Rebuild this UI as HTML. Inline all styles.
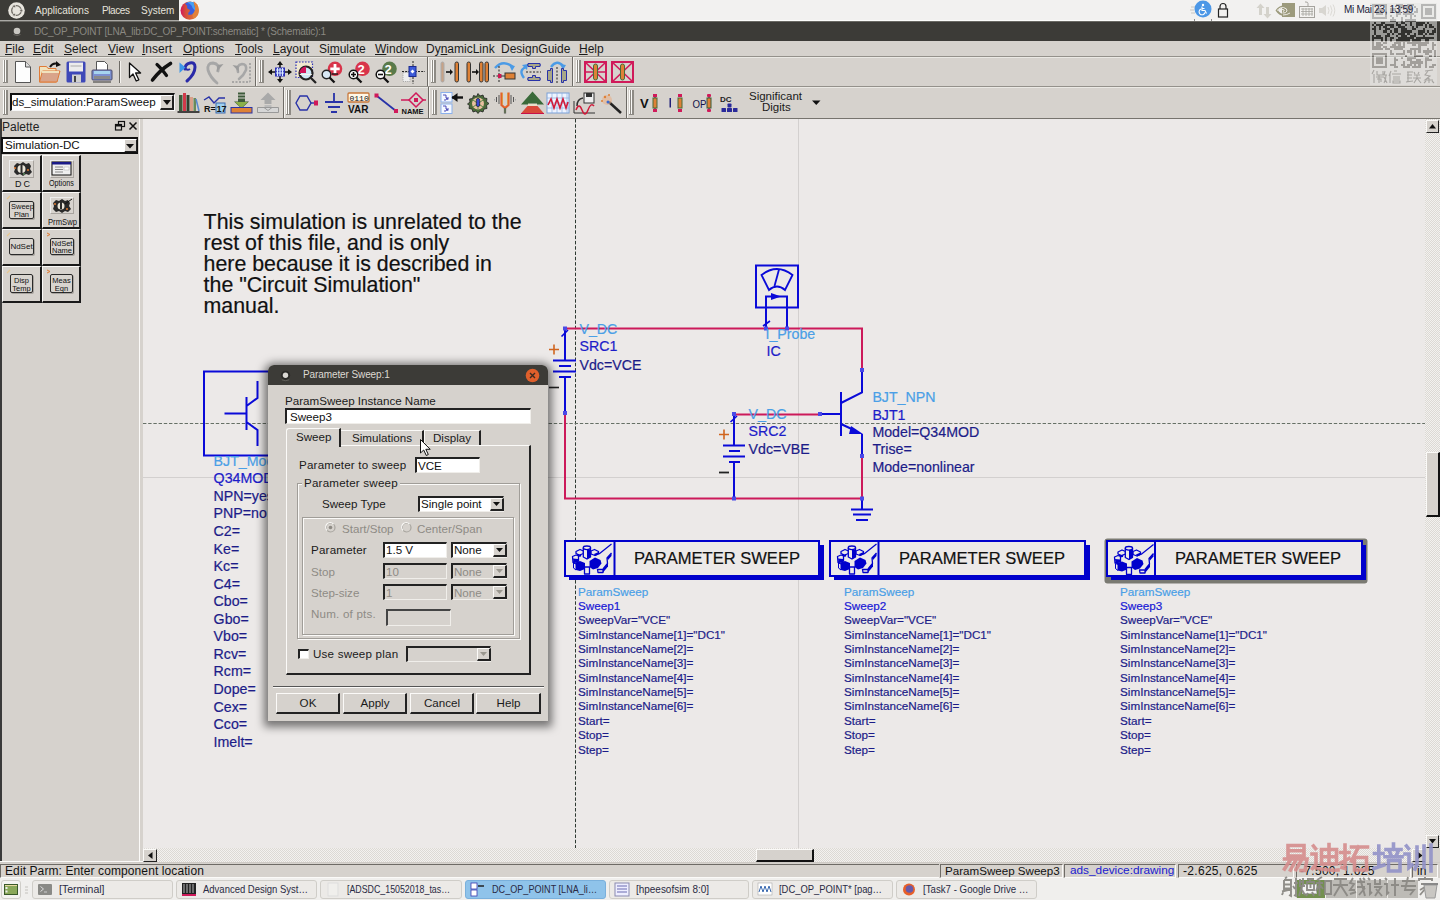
<!DOCTYPE html>
<html><head><meta charset="utf-8">
<style>
*{margin:0;padding:0;box-sizing:border-box}
html,body{width:1440px;height:900px;overflow:hidden;background:#d6d2cd;font-family:"Liberation Sans",sans-serif}
.a{position:absolute}
.t{position:absolute;white-space:nowrap;line-height:1}
svg{position:absolute;overflow:visible}
.cv text{stroke-width:0.2px}
#top{left:0;top:0;width:1440px;height:20px;background:#f2f1f0}
#topdark{left:0;top:0;width:179px;height:20px;background:#3c3b37}
#topline{left:0;top:20px;width:1440px;height:1px;background:#fcfcfb;box-shadow:0 1px 0 #6a6964}
#title{left:0;top:22px;width:1440px;height:19px;background:#3c3b37}
#menu{left:0;top:41px;width:1440px;height:15px;background:#d6d2cd}
.mi{position:absolute;top:43px;font-size:12px;color:#1a1a1a;line-height:1;white-space:nowrap}
#tb1{left:0;top:56px;width:1440px;height:31px;background:#d6d2cd;border-top:1px solid #94918b}
#tb2{left:0;top:86px;width:1440px;height:33px;background:#d6d2cd;border-top:1px solid #94918b;border-bottom:1px solid #77746e}
.hdl{position:absolute;width:5px;background:linear-gradient(90deg,#fbfaf8 0 1px,#8d8a84 1px 2px,#fbfaf8 2px 3px,#8d8a84 3px 5px);border-bottom:1px solid #8d8a84}
.gsep{position:absolute;width:2px;border-left:1px solid #6e6b66;border-right:1px solid #f4f2ee}
#canvas{left:143px;top:119px;width:1282px;height:729px;background:#ece9e8;overflow:hidden}
#pal{left:0;top:119px;width:140px;height:743px;background:#d6d2cd}
#status{left:0;top:862px;width:1440px;height:16px;background:#d6d2cd}
#task{left:0;top:878px;width:1440px;height:22px;background:#f0efed}
</style></head><body>
<!-- top panel -->
<div class="a" id="top"></div>
<div class="a" id="topdark"></div>
<svg style="left:8px;top:2px" width="17" height="17" viewBox="0 0 17 17"><circle cx="8.5" cy="8.5" r="8.3" fill="#e8e5de"/><circle cx="8.5" cy="8.5" r="4.8" fill="none" stroke="#6e6b64" stroke-width="1.3"/><circle cx="13.3" cy="8.5" r="1.5" fill="#6e6b64" stroke="#e8e5de" stroke-width="0.8"/><circle cx="6.1" cy="4.3" r="1.5" fill="#6e6b64" stroke="#e8e5de" stroke-width="0.8"/><circle cx="6.1" cy="12.7" r="1.5" fill="#6e6b64" stroke="#e8e5de" stroke-width="0.8"/></svg>
<div class="t" style="left:35px;top:6px;font-size:10px;color:#e6e3dc">Applications</div>
<div class="t" style="left:102px;top:6px;font-size:10px;color:#e6e3dc;letter-spacing:-0.4px">Places</div>
<div class="t" style="left:141px;top:6px;font-size:10px;color:#e6e3dc">System</div>
<svg style="left:180px;top:0px" width="20" height="21" viewBox="0 0 20 21"><defs><linearGradient id="ffg" x1="0" x2="1" y1="0" y2="0"><stop offset="0" stop-color="#d4145a"/><stop offset="0.3" stop-color="#d4503a"/><stop offset="1" stop-color="#e4823a"/></linearGradient></defs><circle cx="9.6" cy="10.6" r="9.1" fill="url(#ffg)"/><path d="M5 3.5Q9 1 13.5 2.2L14.5 6Q16 10 14 13.5Q11 15.5 8 14.5L8.5 12.5Q10.5 11.5 9.8 9.8Q7.5 9.2 7 7.5Q7.5 5.5 5 3.5Z" fill="#3a5ee0"/><path d="M7 2.5Q10 1.2 13.5 2.2L14.5 6Q15.5 9 15 10.5Q12 8 11.5 5.5Q10 3.5 7 2.5Z" fill="#47a0f0"/><path d="M13.5 1L17.5 4.5Q20 10 18 15Q16 18 13 19L12.5 14Q15.5 11 15 7Q14.5 4 13.5 1Z" fill="#e2823a"/><circle cx="17.5" cy="3.6" r="0.6" fill="#fff"/><circle cx="18.5" cy="5.6" r="0.6" fill="#fff"/></svg>
<div class="a" id="topline"></div><div class="a" style="left:0;top:20px;width:179px;height:1px;background:#aaa9a5"></div>
<!-- tray -->
<svg style="left:1190px;top:4px" width="8" height="12"><path d="M1 3h4M0 6h4M1 9h4" stroke="#c8c6c0" stroke-width="1"/></svg>
<svg style="left:1194px;top:0px" width="18" height="21" viewBox="0 0 18 21"><circle cx="9" cy="9" r="8.5" fill="#4c97e6"/><circle cx="9" cy="5" r="1.2" fill="#fff"/><path d="M8 6.5v4h3l1.5 3M8 8.5h2.5M7 9a3 3 0 1 0 4 3.5" stroke="#fff" stroke-width="1.1" fill="none"/><path d="M0 20h1M17 20h1" stroke="#222"/></svg>
<svg style="left:1217px;top:2px" width="12" height="16" viewBox="0 0 12 16"><path d="M3 7V4.5a3 3 0 0 1 6 0V7" stroke="#222" stroke-width="1.2" fill="none"/><rect x="1.5" y="7" width="9" height="8" fill="none" stroke="#222" stroke-width="1.2"/></svg>
<svg style="left:1256px;top:3px" width="16" height="16" viewBox="0 0 16 16"><path d="M4.5 0.5L0.5 5H3V12H6V5H8.5Z" fill="#d4d2cb"/><path d="M11.5 15.5L7.5 11H10V4H13V11H15.5Z" fill="#d4d2cb"/></svg>
<svg style="left:1274px;top:2px" width="22" height="16" viewBox="0 0 22 16"><rect x="8" y="1" width="13" height="14" fill="#9c9a7c"/><path d="M1.5 8.5Q5 3 11 3.5L11 5Q6.5 5 4 8.5Q6.5 12 11 12.5L11 14Q5 14 1.5 8.5Z" fill="#9c9a7c"/><path d="M3 8.5Q6 5 9.5 5.5Q13.5 6.5 13 9Q12 11.5 8.5 11" fill="none" stroke="#eeece6" stroke-width="1"/><path d="M6 8.5Q8 6.8 10 7.8Q11 9 9 9.5" fill="none" stroke="#eeece6" stroke-width="1"/><path d="M9 13q4 0 7-2" stroke="#eeece6" stroke-width="1" fill="none"/></svg>
<svg style="left:1298px;top:1px" width="18" height="18" viewBox="0 0 18 18"><path d="M10 5V2.5Q10 1 8 1H7" stroke="#a5a39e" fill="none"/><rect x="1.5" y="5.5" width="15" height="11" fill="#f4f3f1" stroke="#a5a39e"/><path d="M3 8h12M3 10.5h12M3 13h12M5 7v8M8 7v8M11 7v8M14 7v8" stroke="#a5a39e" stroke-width="0.8"/></svg>
<svg style="left:1318px;top:4px" width="18" height="13" viewBox="0 0 18 13"><path d="M1 4h3l4-3v11l-4-3H1z" fill="#d8d6d1"/><path d="M10 3q2 3.5 0 7M12.5 1.5q3 5 0 10M15 0.5q3.5 6 0 12" stroke="#dcdad5" fill="none"/></svg>
<!-- title -->
<div class="a" id="title"></div>
<svg style="left:11px;top:25px" width="12" height="12" viewBox="0 0 12 12"><circle cx="6" cy="6" r="3.3" fill="#c9c7c2"/><path d="M2.5 9.5q3.5 2 7 0" stroke="#6b6964" fill="none"/></svg>
<div class="t" style="left:34px;top:27px;font-size:10px;color:#8a8882;letter-spacing:-0.22px">DC_OP_POINT [LNA_lib:DC_OP_POINT:schematic] * (Schematic):1</div>
<!-- menu -->
<div class="a" id="menu"></div>
<div class="mi" style="left:5px"><u>F</u>ile</div>
<div class="mi" style="left:33px"><u>E</u>dit</div>
<div class="mi" style="left:64px"><u>S</u>elect</div>
<div class="mi" style="left:108px"><u>V</u>iew</div>
<div class="mi" style="left:142px"><u>I</u>nsert</div>
<div class="mi" style="left:183px"><u>O</u>ptions</div>
<div class="mi" style="left:235px"><u>T</u>ools</div>
<div class="mi" style="left:273px"><u>L</u>ayout</div>
<div class="mi" style="left:319px">Si<u>m</u>ulate</div>
<div class="mi" style="left:375px"><u>W</u>indow</div>
<div class="mi" style="left:426px">Dy<u>n</u>amicLink</div>
<div class="mi" style="left:501px">DesignGuide</div>
<div class="mi" style="left:579px"><u>H</u>elp</div>
<!-- toolbars -->
<div class="a" id="tb1"></div>
<div class="a" id="tb2"></div>
<div class="a" style="left:0;top:57px;width:1440px;height:1px;background:#ebe9e4"></div>
<div class="a" style="left:0;top:87px;width:1440px;height:1px;background:#ebe9e4"></div>
<!-- handles tb1 -->
<div class="hdl" style="left:3px;top:60px;height:23px"></div>
<div class="gsep" style="left:119px;top:61px;height:22px"></div>
<div class="gsep" style="left:255px;top:57px;height:29px"></div>
<div class="hdl" style="left:259px;top:60px;height:23px"></div>
<div class="gsep" style="left:427px;top:57px;height:29px"></div>
<div class="hdl" style="left:431px;top:60px;height:23px"></div>
<div class="gsep" style="left:572px;top:57px;height:29px"></div>
<div class="hdl" style="left:576px;top:60px;height:23px"></div>
<!-- tb2 -->
<div class="hdl" style="left:3px;top:90px;height:25px"></div>
<div class="gsep" style="left:283px;top:87px;height:31px"></div>
<div class="hdl" style="left:286px;top:90px;height:25px"></div>
<div class="gsep" style="left:428px;top:87px;height:31px"></div>
<div class="hdl" style="left:432px;top:90px;height:25px"></div>
<div class="gsep" style="left:626px;top:87px;height:31px"></div>
<div class="hdl" style="left:629px;top:90px;height:25px"></div>
<!-- tb1 icons -->
<svg style="left:14px;top:61px" width="18" height="22" viewBox="0 0 18 22"><path d="M1.5 0.5h10l5 5.5v15.5h-15z" fill="#fdfdfd" stroke="#555" stroke-width="1"/><path d="M11.5 0.5v5.5h5" fill="#ddd" stroke="#555"/></svg>
<svg style="left:38px;top:61px" width="24" height="22" viewBox="0 0 24 22"><path d="M12 6q3-5 8-3" stroke="#111" stroke-width="2" fill="none"/><path d="M18 0l5 4-5 2z" fill="#111"/><path d="M1.5 5.5h7l1.5 2h8v13.5h-16.5z" fill="#f1e2bd" stroke="#e07b37"/><path d="M1.5 21l3-11h17.5l-3 11z" fill="#d9a48a" stroke="#e07b37"/><path d="M4 11h17" stroke="#f1e2bd" stroke-width="2"/></svg>
<svg style="left:66px;top:61px" width="20" height="22" viewBox="0 0 20 22"><rect x="0.5" y="0.5" width="19" height="21" rx="1.5" fill="#3e48b8"/><rect x="3" y="1.5" width="14" height="9" fill="#ececec"/><path d="M4.5 5h11" stroke="#aaa"/><rect x="6" y="13.5" width="9" height="8" fill="#d0d0d0"/><rect x="8" y="15" width="2" height="6" fill="#444"/></svg>
<svg style="left:91px;top:61px" width="22" height="22" viewBox="0 0 22 22"><path d="M5.5 0.5h8l3 3v6h-11z" fill="#fff" stroke="#555"/><rect x="1" y="9" width="20" height="10" rx="1" fill="#7c8fd0" stroke="#4a4a6a"/><rect x="3" y="10" width="16" height="3" fill="#a6d4ef"/><rect x="3" y="15" width="16" height="3" fill="#8a8a8a"/><path d="M2 21h18" stroke="#333"/></svg>
<svg style="left:128px;top:62px" width="15" height="21" viewBox="0 0 15 21"><path d="M1.5 1v14.5l3.5-3.5 3.2 7 2.6-1.2-3.2-6.8h5z" fill="#fff" stroke="#111" stroke-width="1.3" stroke-linejoin="round"/></svg>
<svg style="left:150px;top:62px" width="23" height="21" viewBox="0 0 23 21"><path d="M20.5 1.5Q10 8 2.5 18" stroke="#111" stroke-width="3.6" stroke-linecap="round" fill="none"/><path d="M7 2.5Q11 6 16.5 13.5" stroke="#111" stroke-width="3.2" stroke-linecap="round" fill="none"/></svg>
<svg style="left:179px;top:61px" width="19" height="22" viewBox="0 0 19 22"><path d="M6 8q0-5 5-6 5-1 5 4 0 7-8 14" stroke="#2a2aa8" stroke-width="3" fill="none" stroke-linecap="round"/><path d="M6 7q2 3 5 1" stroke="#2a2aa8" stroke-width="2" fill="none"/><path d="M0.5 1.5L6.5 6.5L0.5 12Z" fill="#3b95e8"/></svg>
<svg style="left:205px;top:62px" width="19" height="22" viewBox="0 0 19 22"><path d="M13 9q2-7-5-8-6 0-5 7 2 7 9 13" stroke="#a7a7a7" stroke-width="2.8" fill="none" stroke-linecap="round"/><path d="M18.5 2l-6 1-1 7z" fill="#9c9c9c"/></svg>
<svg style="left:230px;top:62px" width="23" height="22" viewBox="0 0 23 22"><path d="M8 10q-2-7 4-8 5 0 4 6-2 5-7 9" stroke="#a7a7a7" stroke-width="2.6" fill="none" stroke-linecap="round"/><path d="M2.5 3l6 1 0.5 6z" fill="#9c9c9c"/><path d="M20 1v19M2 20h18" stroke="#999" stroke-width="1.5" stroke-dasharray="2 1.5"/></svg>
<svg style="left:268px;top:61px" width="24" height="22" viewBox="0 0 24 22"><path d="M12 0l-3 4h6zM12 22l-3-4h6zM0 11l4-3v6zM24 11l-4-3v6z" fill="#111"/><path d="M12 3v16M3 11h18" stroke="#111" stroke-width="1.5"/><rect x="7" y="6.5" width="10" height="9" fill="#2c2fb8"/><path d="M8 9h8M8 12h8M9.5 7v8M12 7v8M14.5 7v8" stroke="#d9ecff" stroke-width="1.2"/></svg>
<svg style="left:295px;top:61px" width="23" height="23" viewBox="0 0 23 23"><rect x="1" y="1" width="16.5" height="15.5" fill="#efe8d0" stroke="#2b2fb5" stroke-width="1.2" stroke-dasharray="1.6 1.4"/><circle cx="11" cy="12" r="6.5" fill="#cfe6f6" stroke="#222" stroke-width="2.2"/><path d="M11 12V5.6A6.4 6.4 0 0 0 4.6 12Z" fill="#d0145a"/><path d="M4.8 13.5h12" stroke="#f4f4f4" stroke-width="1"/><path d="M16 17l5 5" stroke="#222" stroke-width="2.2"/></svg>
<svg style="left:320px;top:61px" width="24" height="23" viewBox="0 0 24 23"><circle cx="15" cy="7.8" r="7.3" fill="#d8344a"/><path d="M15 3v9.5M10.3 7.8h9.4" stroke="#fff" stroke-width="2.8"/><path d="M12 13h6" stroke="#111" stroke-width="1.3"/><circle cx="6.5" cy="13.5" r="4.3" fill="#d8e8f4" stroke="#222" stroke-width="1.4"/><path d="M9.5 16.5l5 5" stroke="#111" stroke-width="2.3"/></svg>
<svg style="left:347px;top:61px" width="24" height="23" viewBox="0 0 24 23"><circle cx="15.5" cy="7.8" r="7.3" fill="#d8344a"/><text x="10.5" y="13.2" font-size="13" font-weight="bold" fill="#fff" font-family="Liberation Sans">2</text><circle cx="6.5" cy="13.5" r="4.3" fill="#fff" stroke="#111" stroke-width="1.5"/><path d="M4 13.5h5M6.5 11v5" stroke="#111" stroke-width="1.6"/><path d="M9.5 16.5l5 5" stroke="#111" stroke-width="2.3"/></svg>
<svg style="left:374px;top:61px" width="24" height="23" viewBox="0 0 24 23"><circle cx="15.5" cy="7.8" r="7.3" fill="#5a7a4a"/><text x="10.5" y="13.2" font-size="13" font-weight="bold" fill="#fff" font-family="Liberation Sans">2</text><circle cx="6.5" cy="13.5" r="4.3" fill="#fff" stroke="#111" stroke-width="1.5"/><path d="M4 13.5h5" stroke="#111" stroke-width="1.6"/><path d="M9.5 16.5l5 5" stroke="#111" stroke-width="2.3"/></svg>
<svg style="left:401px;top:61px" width="24" height="23" viewBox="0 0 24 23"><path d="M12 0v23M1 10.5h23" stroke="#222" stroke-width="1" stroke-dasharray="2 1.2"/><rect x="2" y="11.5" width="7" height="9" fill="#eeeeee" stroke="#aaa" stroke-dasharray="1.2 1"/><rect x="8" y="5.5" width="7" height="10" fill="#3d5bd8" stroke="#1b2a90"/><path d="M9.5 10.5l2-2 2 2-2 2z" fill="#fff"/></svg>
<svg style="left:440px;top:61px" width="20" height="23" viewBox="0 0 20 23"><rect x="1" y="1" width="3" height="20" rx="1.5" fill="#c8a387" stroke="#aaa"/><path d="M6 11h5" stroke="#111" stroke-width="1.6"/><path d="M10 8l3 3-3 3z" fill="#111"/><rect x="15" y="1" width="3.5" height="20" rx="1.7" fill="#de8136" stroke="#333"/></svg>
<svg style="left:466px;top:61px" width="24" height="23" viewBox="0 0 24 23"><rect x="1" y="1" width="3.5" height="20" rx="1.7" fill="#de8136" stroke="#333"/><path d="M6 11h5" stroke="#111" stroke-width="1.6"/><path d="M10 8l3 3-3 3z" fill="#111"/><rect x="13.5" y="1" width="3.5" height="20" rx="1.7" fill="#de8136" stroke="#333"/><rect x="19" y="1" width="3.5" height="20" rx="1.7" fill="#de8136" stroke="#333"/></svg>
<svg style="left:493px;top:61px" width="23" height="23" viewBox="0 0 23 23"><path d="M2 7q8-9 18-1" stroke="#4b9be6" stroke-width="2.4" fill="none"/><path d="M16 4l6 1-3 5z" fill="#4b9be6"/><path d="M6 5v17M0 15h8" stroke="#222" stroke-dasharray="2 1.5"/><rect x="5" y="13" width="3.5" height="4" fill="#cf1752"/><rect x="12" y="12" width="10" height="6" fill="#de8136" stroke="#333"/><path d="M8 15h4" stroke="#333"/></svg>
<svg style="left:519px;top:61px" width="23" height="23" viewBox="0 0 23 23"><path d="M5 17q-6-8 2-11" stroke="#4b9be6" stroke-width="2.4" fill="none"/><path d="M3 4l6-1-1 6z" fill="#4b9be6"/><path d="M8 4h14M8 18h14" stroke="#2832a8" stroke-width="1"/><path d="M9 2.5h12v3h-4.5v2h-3v-2H9zM9 19.5h12v-3h-4.5v-2h-3v2H9z" fill="#a9a787" stroke="#2832a8"/><path d="M7 11h15" stroke="#222" stroke-dasharray="2 1.5"/></svg>
<svg style="left:545px;top:61px" width="24" height="23" viewBox="0 0 24 23"><path d="M6 6q6-8 12-1" stroke="#4b9be6" stroke-width="2.4" fill="none"/><path d="M15 3l6 1-3 5z" fill="#4b9be6"/><path d="M12 6v17" stroke="#222" stroke-dasharray="2 1.5"/><path d="M2.5 9.5h3v-2h2v14h-2v-2h-3zM21.5 9.5h-3v-2h-2v14h2v-2h3z" fill="#a9a787" stroke="#2832a8"/></svg>
<svg style="left:584px;top:61px" width="23" height="22" viewBox="0 0 23 22"><rect x="1" y="1" width="21" height="20" fill="none" stroke="#d01a5a" stroke-width="2"/><path d="M1 1l21 20M22 1l-21 20M1 11h21" stroke="#d01a5a" stroke-width="1.6"/><rect x="9.5" y="3" width="4" height="16" rx="2" fill="#de8136" stroke="#4a6a3a"/></svg>
<svg style="left:611px;top:61px" width="23" height="22" viewBox="0 0 23 22"><rect x="1" y="1" width="21" height="20" fill="none" stroke="#d01a5a" stroke-width="2"/><path d="M1 1l21 20M22 1l-21 20" stroke="#d01a5a" stroke-width="1.6"/><rect x="9.5" y="3" width="4" height="16" rx="2" fill="#de8136" stroke="#4a6a3a"/></svg>
<!-- tb2 icons -->
<div class="a" style="left:10px;top:93px;width:165px;height:18px;background:#fff;border-top:2px solid #111;border-left:2px solid #111;border-bottom:1px solid #f8f8f8;border-right:1px solid #f8f8f8"></div>
<div class="t" style="left:12px;top:96px;font-size:11.6px;color:#111">ds_simulation:ParamSweep</div>
<div class="a" style="left:160px;top:95px;width:14px;height:15px;background:#d6d2cd;border-left:1px solid #fff;border-top:1px solid #fff;border-right:2px solid #222;border-bottom:2px solid #222"></div>
<svg style="left:163px;top:100px" width="8" height="5"><path d="M0 0h8l-4 5z" fill="#111"/></svg>
<svg style="left:177px;top:92px" width="23" height="21" viewBox="0 0 23 21"><rect x="2" y="3" width="3.5" height="16" fill="#3d5a3a"/><rect x="6" y="1" width="3" height="18" fill="#d13a4a"/><rect x="9.5" y="3" width="3" height="16" fill="#2f3f2f"/><rect x="13" y="5" width="3" height="14" fill="#d9a08a"/><rect x="16.5" y="6" width="2.5" height="13" fill="#6a8a5a"/><path d="M19 7l3 12" stroke="#5a8ad0" stroke-width="1.5"/><path d="M0.5 20h22" stroke="#111" stroke-width="1.5"/></svg>
<svg style="left:204px;top:92px" width="22" height="22" viewBox="0 0 22 22"><path d="M0 8l5-3 5 6 5-5h6" stroke="#2832a8" stroke-width="1.4" fill="none"/><text x="0" y="20" font-size="9" font-weight="bold" fill="#111" font-family="Liberation Sans">R=</text><rect x="12" y="11" width="9" height="10" fill="#9fd0ef" stroke="#3a6ab0"/><text x="12.5" y="20" font-size="9" font-weight="bold" fill="#111" font-family="Liberation Sans">17</text></svg>
<svg style="left:230px;top:92px" width="23" height="22" viewBox="0 0 23 22"><rect x="8" y="0.5" width="7" height="2" fill="#3d5a3a"/><rect x="8" y="3.5" width="7" height="2" fill="#3d5a3a"/><path d="M8 6.5h7v3h4l-7.5 7-7.5-7h4z" fill="#3d5a3a"/><path d="M5 10l6.5 6 6.5-6" fill="#8ab04a"/><rect x="1" y="15.5" width="21" height="5.5" fill="#de8136" stroke="#2832a8"/></svg>
<svg style="left:256px;top:92px" width="24" height="22" viewBox="0 0 24 22"><path d="M12 0.5l7.5 7.5h-4v4h-7v-4h-4z" fill="#a9a9a9"/><rect x="8.5" y="13" width="7" height="2" fill="#bbb"/><path d="M1.5 15.5h21v5h-21z" fill="#d6d6d6" stroke="#999"/><path d="M8 15.5l4 3 4-3" stroke="#999" fill="none"/></svg>
<svg style="left:295px;top:94px" width="24" height="18" viewBox="0 0 24 18"><path d="M5 2h7l4 7-4 7H5L1 9z" fill="none" stroke="#2832a8" stroke-width="1.4"/><path d="M16 9h4" stroke="#2832a8" stroke-width="1.4"/><rect x="19" y="6.5" width="4" height="5" fill="#d01a5a"/></svg>
<svg style="left:324px;top:93px" width="20" height="21" viewBox="0 0 20 21"><path d="M10 0v9M1 9h18M4 14h12M7 19h6" stroke="#2832a8" stroke-width="1.8"/></svg>
<svg style="left:347px;top:92px" width="24" height="23" viewBox="0 0 24 23"><rect x="1" y="1" width="21" height="9" rx="1" fill="#fff7e8" stroke="#c8783a" stroke-width="1.3"/><text x="2.5" y="9" font-size="8" fill="#111" font-family="Liberation Mono">0110</text><text x="1" y="21" font-size="10" font-weight="bold" fill="#111" font-family="Liberation Sans">VAR</text></svg>
<svg style="left:374px;top:93px" width="25" height="21" viewBox="0 0 25 21"><path d="M3 3l19 15" stroke="#2832a8" stroke-width="1.8"/><rect x="0.5" y="0.5" width="4" height="4" fill="#d01a5a"/><rect x="20" y="16" width="4" height="4" fill="#d01a5a"/></svg>
<svg style="left:401px;top:92px" width="25" height="23" viewBox="0 0 25 23"><path d="M15 1l7 7-7 7-7-7z" fill="none" stroke="#d01a5a" stroke-width="1.5"/><rect x="13" y="6" width="4" height="4" fill="#d01a5a"/><path d="M0 8h8M22 8h3" stroke="#d01a5a" stroke-width="1.5"/><text x="0.5" y="22" font-size="7.5" font-weight="bold" fill="#111" font-family="Liberation Sans">NAME</text></svg>
<svg style="left:440px;top:92px" width="24" height="22" viewBox="0 0 24 22"><rect x="1" y="0.5" width="11" height="9.5" fill="#f4f8ff" stroke="#8ab0ec"/><rect x="1" y="12" width="11" height="9.5" fill="#f4f8ff" stroke="#8ab0ec"/><path d="M3 3h3v3h3M4 8h2l1-2 1 2M3 14h3v3h3M4 19h2l1-2 1 2" stroke="#3a3ab0" stroke-width="0.9" fill="none"/><path d="M12 5.5h11" stroke="#111" stroke-width="2.4"/><path d="M11.5 5.5l6-4.5v9z" fill="#111"/></svg>
<svg style="left:467px;top:93px" width="22" height="20" viewBox="0 0 22 20"><path d="M11 0.5l2 2.5 3-1 1 3 3 0.5-0.5 3 2.5 2-2.5 2 0.5 3-3 0.5-1 3-3-1-2 2.5-2-2.5-3 1-1-3-3-0.5 0.5-3L0.5 11 3 9 2.5 6l3-0.5 1-3 3 1z" fill="#4a6a3a" stroke="#222" stroke-width="0.8"/><circle cx="11" cy="10.5" r="6" fill="#e8c0a0"/><path d="M6 7l10 7M16 7L6 14M11 4.5v12" stroke="#5a8a4a" stroke-width="1"/><rect x="9.3" y="5.5" width="3.4" height="8" rx="1.5" fill="#3a4ad0" stroke="#111" stroke-width="0.6"/></svg>
<svg style="left:494px;top:92px" width="22" height="22" viewBox="0 0 22 22"><path d="M7.5 0.5V13L11 16L14.5 13V0.5" stroke="#e2602a" stroke-width="2.2" fill="none"/><path d="M8.5 1V12.5M13.5 1V12.5" stroke="#de9a3a" stroke-width="0.8"/><path d="M11 16V21.5" stroke="#555" stroke-width="2.2"/><path d="M11 16V21" stroke="#7a9a5a" stroke-width="0.8"/><path d="M2.5 5V10M5 3V12M17 3V12M19.5 5V10" stroke="#555" stroke-width="1"/><path d="M0.5 7V8.5M21.5 7V8.5" stroke="#aaa"/></svg>
<svg style="left:520px;top:91px" width="25" height="23" viewBox="0 0 25 23"><path d="M12.5 0.5L1 13.5h7v-1h9v1h7z" fill="#3a6a3a"/><path d="M8 13h9v2H8z" fill="#e8e0c8"/><path d="M7.5 15h10l6.5 7.5H1z" fill="#d84a3a"/><path d="M1 22.5h23" stroke="#c8124a" stroke-width="1"/></svg>
<svg style="left:546px;top:92px" width="24" height="22" viewBox="0 0 24 22"><rect x="1" y="1" width="22" height="20" fill="#eef4ff" stroke="#7aa0d8"/><path d="M1 6h22M1 11h22M1 16h22M6 1v20M11 1v20M16 1v20M21 1v20" stroke="#8ab0e0" stroke-width="0.7"/><path d="M2 13l3-6 3 9 3-9 3 9 3-9 3 9 2-6" stroke="#d01a3a" stroke-width="1.6" fill="none"/></svg>
<svg style="left:573px;top:92px" width="23" height="22" viewBox="0 0 23 22"><rect x="11" y="1" width="10" height="10" fill="#eee" stroke="#333"/><rect x="13" y="1" width="6" height="4" fill="#333"/><path d="M10 6q-6 1-6 8" stroke="#333" stroke-width="1.5" fill="none"/><path d="M1 21V9M1 21h21" stroke="#333"/><path d="M3 18q3-8 6 0t6 0 6-4" stroke="#d01a3a" stroke-width="1.5" fill="none"/></svg>
<svg style="left:599px;top:92px" width="24" height="22" viewBox="0 0 24 22"><path d="M10 10l12 11" stroke="#222" stroke-width="2.5"/><circle cx="8" cy="8" r="5" fill="#e8b08a" opacity="0.6"/><circle cx="6" cy="5" r="1.2" fill="#de8136"/><circle cx="10" cy="3" r="1" fill="#de8136"/><circle cx="3" cy="9" r="1" fill="#de8136"/><circle cx="9" cy="10" r="1.5" fill="#3a6ad0"/></svg>
<svg style="left:640px;top:93px" width="20" height="20" viewBox="0 0 20 20"><text x="0" y="15" font-size="13" font-weight="bold" fill="#111" font-family="Liberation Sans">V</text><rect x="13" y="5" width="4" height="10" fill="#de8136" stroke="#4a6a3a"/><rect x="13" y="1" width="4" height="3" fill="#d01a5a"/><rect x="13" y="16" width="4" height="3" fill="#d01a5a"/><path d="M15 4v1M15 15v1" stroke="#333"/></svg>
<svg style="left:668px;top:93px" width="17" height="20" viewBox="0 0 17 20"><rect x="1.5" y="5" width="1.5" height="9.5" fill="#20207a"/><rect x="10" y="5" width="4" height="10" fill="#de8136" stroke="#4a6a3a"/><rect x="10" y="1" width="4" height="3" fill="#d01a5a"/><rect x="10" y="16" width="4" height="3" fill="#d01a5a"/></svg>
<svg style="left:693px;top:93px" width="22" height="20" viewBox="0 0 22 20"><text x="-0.5" y="14.5" font-size="11" fill="#14144a" font-family="Liberation Sans" textLength="14" lengthAdjust="spacingAndGlyphs">OP</text><rect x="14" y="5" width="4" height="10" fill="#de8136" stroke="#3a5a3a"/><rect x="14" y="1" width="4" height="3" rx="1" fill="#d01a5a"/><rect x="14" y="16" width="4" height="3" rx="1" fill="#d01a5a"/><path d="M16 4v1M16 15v1" stroke="#333"/></svg>
<svg style="left:720px;top:93px" width="20" height="20" viewBox="0 0 20 20"><text x="0" y="9" font-size="8" font-weight="bold" fill="#222" font-family="Liberation Sans">DC</text><rect x="7.5" y="10.5" width="4" height="4" rx="0.8" fill="#2a2a9a"/><rect x="1.5" y="15" width="4.5" height="4" rx="0.5" fill="#2a2a9a"/><rect x="7" y="15" width="5" height="4" rx="0.5" fill="#2a2a9a"/><rect x="13" y="15" width="4.5" height="4" rx="0.5" fill="#2a2a9a"/></svg>
<div class="t" style="left:749px;top:91px;font-size:11.5px;color:#1a1a1a">Significant</div>
<div class="t" style="left:762px;top:102px;font-size:11.5px;color:#1a1a1a">Digits</div>
<svg style="left:812px;top:100px" width="9" height="6"><path d="M0 0.5h8.5l-4.25 4.5z" fill="#111"/></svg>

<!-- palette -->
<div class="a" id="pal"></div>
<div class="a" style="left:0;top:119px;width:2px;height:742px;background:#3a3a3a"></div>
<div class="a" style="left:139px;top:119px;width:1px;height:742px;background:#fbfaf8"></div>
<div class="t" style="left:2px;top:121px;font-size:12px;color:#222">Palette</div>
<svg style="left:115px;top:121px" width="10" height="10" viewBox="0 0 10 10"><rect x="3.5" y="0.5" width="6" height="5" fill="none" stroke="#111" stroke-width="1.2"/><rect x="0.5" y="3.5" width="6" height="5.5" fill="#d6d2cd" stroke="#111" stroke-width="1.2"/><path d="M0.5 4.5h6" stroke="#111" stroke-width="2"/></svg>
<svg style="left:129px;top:122px" width="8" height="8" viewBox="0 0 8 8"><path d="M0.5 0.5L7.5 7.5M7.5 0.5L0.5 7.5" stroke="#111" stroke-width="1.5"/></svg>
<div class="a" style="left:1px;top:137px;width:137px;height:17px;background:#fff;border-top:2px solid #111;border-left:2px solid #111;border-bottom:1px solid #fff;border-right:2px solid #111"></div>
<div class="t" style="left:5px;top:139px;font-size:11.6px;color:#111">Simulation-DC</div>
<div class="a" style="left:124px;top:139px;width:13px;height:14px;background:#d6d2cd;border-left:1px solid #fff;border-top:1px solid #fff;border-right:1px solid #222;border-bottom:2px solid #222"></div>
<svg style="left:126px;top:144px" width="8" height="5"><path d="M0 0h8l-4 4.5z" fill="#111"/></svg>
<div class="a" style="left:1px;top:152px;width:137px;height:2px;background:#111"></div>
<!-- buttons -->
<div class="a" style="left:2px;top:154.5px;width:39.5px;height:37px;background:#d6d2cd;border-top:1px solid #fbfaf8;border-left:1px solid #fbfaf8;border-right:2px solid #1a1a1a;border-bottom:2px solid #1a1a1a"></div>
<div class="a" style="left:41.5px;top:154.5px;width:39.5px;height:37px;background:#d6d2cd;border-top:1px solid #fbfaf8;border-left:1px solid #fbfaf8;border-right:2px solid #1a1a1a;border-bottom:2px solid #1a1a1a"></div>
<div class="a" style="left:2px;top:191.5px;width:39.5px;height:37px;background:#d6d2cd;border-top:1px solid #fbfaf8;border-left:1px solid #fbfaf8;border-right:2px solid #1a1a1a;border-bottom:2px solid #1a1a1a"></div>
<div class="a" style="left:41.5px;top:191.5px;width:39.5px;height:37px;background:#d6d2cd;border-top:1px solid #fbfaf8;border-left:1px solid #fbfaf8;border-right:2px solid #1a1a1a;border-bottom:2px solid #1a1a1a"></div>
<div class="a" style="left:2px;top:228.5px;width:39.5px;height:37px;background:#d6d2cd;border-top:1px solid #fbfaf8;border-left:1px solid #fbfaf8;border-right:2px solid #1a1a1a;border-bottom:2px solid #1a1a1a"></div>
<div class="a" style="left:41.5px;top:228.5px;width:39.5px;height:37px;background:#d6d2cd;border-top:1px solid #fbfaf8;border-left:1px solid #fbfaf8;border-right:2px solid #1a1a1a;border-bottom:2px solid #1a1a1a"></div>
<div class="a" style="left:2px;top:265.5px;width:39.5px;height:37px;background:#d6d2cd;border-top:1px solid #fbfaf8;border-left:1px solid #fbfaf8;border-right:2px solid #1a1a1a;border-bottom:2px solid #1a1a1a"></div>
<div class="a" style="left:41.5px;top:265.5px;width:39.5px;height:37px;background:#d6d2cd;border-top:1px solid #fbfaf8;border-left:1px solid #fbfaf8;border-right:2px solid #1a1a1a;border-bottom:2px solid #1a1a1a"></div><!-- DC -->
<div class="a" style="left:9px;top:160px;width:25px;height:18px;background:#d8d4cf;border:1px solid #eee;border-right-color:#a8a49f;border-bottom-color:#a8a49f"></div>
<svg style="left:11px;top:161px" width="21" height="16" viewBox="0 0 21 16"><path d="M3 5l3-3 3 1 3-2 3 2 3-1 2 3-1 3 2 3-3 3-3-1-3 2-3-2-3 1-3-3 1-3z" fill="#2a2a2a"/><circle cx="10.5" cy="8" r="4" fill="#e8e4d8"/><rect x="9.5" y="3" width="2" height="9" fill="#2a2a2a"/><circle cx="4" cy="7" r="1" fill="#e07a30"/><circle cx="17" cy="9" r="1" fill="#e07a30"/><circle cx="13" cy="13" r="1" fill="#5a8a5a"/></svg>
<div class="t" style="left:15px;top:180px;font-size:9px;color:#111;font-weight:normal;letter-spacing:2px">DC</div>
<!-- Options -->
<div class="a" style="left:50px;top:160px;width:24px;height:18px;background:#d8d4cf;border:1px solid #eee;border-right-color:#a8a49f;border-bottom-color:#a8a49f"></div>
<svg style="left:51px;top:161px" width="21" height="16" viewBox="0 0 21 16"><rect x="1" y="1" width="19" height="13" fill="#efefef" stroke="#111"/><rect x="1" y="1" width="19" height="2.5" fill="#1a1a88"/><path d="M4 6h8M4 8.5h8M4 11h8" stroke="#888" stroke-width="1"/><rect x="13" y="6" width="5" height="3" fill="#fff" stroke="#aaa" stroke-width="0.5"/></svg>
<div class="t" style="left:49px;top:179px;font-size:9px;color:#111;font-weight:normal;transform:scaleX(0.8);transform-origin:0 0">Options</div>
<!-- Sweep Plan -->
<div class="a" style="left:9px;top:201px;width:25px;height:18px;background:#d8d4cf;border:1.5px solid #2a2a2a;border-radius:2px;box-shadow:1px 1px 0 #a8a49f"></div>
<div class="t" style="left:11px;top:203px;font-size:7.5px;line-height:7.5px;color:#111;font-weight:normal;text-align:center;width:21px">Sweep<br>Plan</div>
<svg style="left:7px;top:196px" width="4" height="4"><path d="M0 3L3 0" stroke="#e8c890" stroke-width="1.2"/></svg>
<!-- PrmSwp -->
<div class="a" style="left:50px;top:197px;width:24px;height:17px;background:#d8d4cf;border:1px solid #eee;border-right-color:#a8a49f;border-bottom-color:#a8a49f"></div>
<svg style="left:51px;top:198px" width="22" height="15" viewBox="0 0 22 15"><path d="M2 5l3-3 3 1 3-2 3 2 3-1 2 3-1 3 2 3-3 3-3-1-3 2-3-2-3 1-3-3 1-3z" fill="#2a2a2a"/><circle cx="10" cy="8" r="3.5" fill="#e8e4d8"/><rect x="9" y="2" width="2" height="9" fill="#2a2a2a"/><path d="M14 6L21 1" stroke="#111"/><circle cx="4" cy="6" r="1" fill="#e07a30"/><circle cx="16" cy="11" r="1" fill="#e07a30"/></svg>
<div class="t" style="left:48px;top:218px;font-size:9px;color:#111;font-weight:normal;transform:scaleX(0.85);transform-origin:0 0">PrmSwp</div>
<!-- NdSet -->
<div class="a" style="left:9px;top:238px;width:25px;height:17px;background:#d8d4cf;border:1.5px solid #2a2a2a;border-radius:2px;box-shadow:1px 1px 0 #a8a49f"></div>
<div class="t" style="left:10px;top:243px;font-size:8px;color:#111;font-weight:normal;text-align:center;width:23px">NdSet</div>
<svg style="left:7px;top:233px" width="4" height="4"><path d="M0 3L3 0" stroke="#e8c890" stroke-width="1.2"/></svg>
<!-- NdSet Name -->
<div class="a" style="left:50px;top:238px;width:24px;height:17px;background:#d8d4cf;border:1.5px solid #2a2a2a;border-radius:2px;box-shadow:1px 1px 0 #a8a49f"></div>
<div class="t" style="left:51px;top:240px;font-size:7.5px;line-height:7px;color:#111;font-weight:normal;text-align:center;width:22px">NdSet<br>Name</div>
<svg style="left:47px;top:233px" width="4" height="4"><path d="M0 0L3 1.5L0 3" stroke="#e07a30" stroke-width="1" fill="none"/></svg>
<!-- Disp Temp -->
<div class="a" style="left:10px;top:274px;width:23px;height:19px;background:#d8d4cf;border:1.5px solid #2a2a2a;border-radius:2px;box-shadow:1px 1px 0 #a8a49f"></div>
<div class="t" style="left:11px;top:277px;font-size:7.5px;line-height:7.5px;color:#111;font-weight:normal;text-align:center;width:21px">Disp<br>Temp</div>
<svg style="left:7px;top:270px" width="4" height="4"><path d="M0 3L3 0" stroke="#e8c890" stroke-width="1.2"/></svg>
<!-- Meas Eqn -->
<div class="a" style="left:50px;top:274px;width:23px;height:19px;background:#d8d4cf;border:1.5px solid #2a2a2a;border-radius:2px;box-shadow:1px 1px 0 #a8a49f"></div>
<div class="t" style="left:51px;top:277px;font-size:7.5px;line-height:7.5px;color:#111;font-weight:normal;text-align:center;width:21px">Meas<br>Eqn</div>
<svg style="left:47px;top:270px" width="4" height="4"><path d="M0 0L3 1.5L0 3" stroke="#e07a30" stroke-width="1" fill="none"/></svg>

<div class="a" id="canvas">
<svg style="left:-143px;top:-119px" width="1440" height="900" viewBox="0 0 1440 900" font-family="Liberation Sans" class="cv">
<!-- grid lines -->
<path d="M798.5 119V848M143 477.5H1425" stroke="#d3d0cf" stroke-width="1"/>
<!-- crosshair -->
<path d="M575.5 119V848" stroke="#2e3a32" stroke-width="1" stroke-dasharray="3.5 1.8"/>
<path d="M143 423.5H1425" stroke="#667066" stroke-width="1" stroke-dasharray="3.4 1.8"/>
<!-- note text -->
<g font-size="21.35" fill="#111" stroke="#111">
<text x="203.6" y="228.9">This simulation is unrelated to the</text>
<text x="203.6" y="249.9">rest of this file, and is only</text>
<text x="203.6" y="270.9">here because it is described in</text>
<text x="203.6" y="291.9">the "Circuit Simulation"</text>
<text x="203.6" y="312.9">manual.</text>
</g>
<!-- BJT model -->
<rect x="204" y="371.5" width="120" height="84" fill="none" stroke="#0a0ad8" stroke-width="2"/>
<path d="M224.5 413.5H246M246.5 397V430M246.5 406L257.5 398V381M246.5 422L257.5 430V446" stroke="#0a0ad8" stroke-width="2" fill="none"/>
<g font-size="14.2">
<text x="213.6" y="465.6" fill="#4a9fe6" stroke="#4a9fe6">BJT_Model</text>
<text x="213.6" y="483.2" fill="#1c1cc8" stroke="#1c1cc8">Q34MOD</text>
<g fill="#1c1c88" stroke="#1c1c88">
<text x="213.6" y="500.7">NPN=yes</text>
<text x="213.6" y="518.3">PNP=no</text>
<text x="213.6" y="535.9">C2=</text>
<text x="213.6" y="553.5">Ke=</text>
<text x="213.6" y="571.0">Kc=</text>
<text x="213.6" y="588.6">C4=</text>
<text x="213.6" y="606.2">Cbo=</text>
<text x="213.6" y="623.7">Gbo=</text>
<text x="213.6" y="641.3">Vbo=</text>
<text x="213.6" y="658.9">Rcv=</text>
<text x="213.6" y="676.4">Rcm=</text>
<text x="213.6" y="694.0">Dope=</text>
<text x="213.6" y="711.6">Cex=</text>
<text x="213.6" y="729.2">Cco=</text>
<text x="213.6" y="746.7">Imelt=</text>
</g></g>
<!-- wires -->
<path d="M565 328.5H862V370M787 328.5H862M565 413V498.5H862V456M734 498.5V498M734 414.5H820" stroke="#cc1a5a" stroke-width="2" fill="none"/>
<!-- SRC1 -->
<path d="M565 329V360M553 360.5H576M559 366H571M553 371.5H576M559 377H571M565 377V413" stroke="#0a0ad8" stroke-width="2" fill="none"/>
<path d="M561.5 336.5L568 330" stroke="#0a0ad8" stroke-width="1.6"/>
<path d="M549 349.5H559M554 344.5V354.5" stroke="#d0641e" stroke-width="1.6"/>
<path d="M549 387.5H559" stroke="#222" stroke-width="1.6"/>
<!-- SRC2 -->
<path d="M734 415V445M723 445.5H745M729 451H740M723 456.5H745M729 462H740M734 462V498" stroke="#0a0ad8" stroke-width="2" fill="none"/>
<path d="M730.5 422L737 416" stroke="#0a0ad8" stroke-width="1.6"/>
<path d="M719 434.5H729M724 429.5V439.5" stroke="#d0641e" stroke-width="1.6"/>
<path d="M719 472.5H729" stroke="#222" stroke-width="1.8"/>
<!-- BJT -->
<path d="M820 414H841M841 392V436M841 403L862 392.5V370M841 424L856 431M862 434V456" stroke="#0a0ad8" stroke-width="2" fill="none"/>
<path d="M851 426L863 434L849 434Z" fill="#0a0ad8"/>
<!-- ground -->
<path d="M862 498V509M851 509.5H873M853 514.5H871M856 520H868" stroke="#0a0ad8" stroke-width="2" fill="none"/>
<!-- probe -->
<rect x="756" y="265.5" width="42" height="42" fill="none" stroke="#0a0ad8" stroke-width="2"/>
<path d="M761.5 275Q777 263 792.5 275L785 290Q777 283 769 290Z" fill="none" stroke="#0a0ad8" stroke-width="1.8"/>
<path d="M779 269.5L774.5 286" stroke="#0a0ad8" stroke-width="1.8"/>
<path d="M766 328V296.5H787V328" stroke="#0a0ad8" stroke-width="2" fill="none"/>
<path d="M771 293L781 296.5L771 300Z" fill="#0a0ad8"/>
<path d="M763 326L770 321" stroke="#0a0ad8" stroke-width="1.6"/>
<!-- pins -->
<g fill="#4a4ae6">
<rect x="563" y="326.5" width="4" height="4"/><rect x="563" y="411" width="4" height="4"/>
<rect x="764" y="326.5" width="4" height="4"/><rect x="785" y="326.5" width="4" height="4"/>
<rect x="732" y="412" width="4" height="4"/><rect x="732" y="496.5" width="4" height="4"/>
<rect x="818" y="412" width="4" height="4"/><rect x="860" y="368" width="4" height="4"/>
<rect x="860" y="454" width="4" height="4"/><rect x="860" y="496.5" width="4" height="4"/>
</g>
<!-- labels -->
<g font-size="14.2">
<text x="579.5" y="333.8" fill="#4a9fe6" stroke="#4a9fe6">V_DC</text>
<text x="579.5" y="351.3" fill="#1c1cc8" stroke="#1c1cc8">SRC1</text>
<text x="579.5" y="369.7" fill="#1c1c88" stroke="#1c1c88">Vdc=VCE</text>
<text x="765.5" y="338.5" fill="#4a9fe6" stroke="#4a9fe6">I_Probe</text>
<text x="766.5" y="355.5" fill="#1c1cc8" stroke="#1c1cc8">IC</text>
<text x="748.6" y="418.5" fill="#4a9fe6" stroke="#4a9fe6">V_DC</text>
<text x="748.6" y="436" fill="#1c1cc8" stroke="#1c1cc8">SRC2</text>
<text x="748.6" y="453.9" fill="#1c1c88" stroke="#1c1c88">Vdc=VBE</text>
<text x="872.4" y="401.8" fill="#4a9fe6" stroke="#4a9fe6">BJT_NPN</text>
<text x="872.4" y="419.5" fill="#1c1cc8" stroke="#1c1cc8">BJT1</text>
<g fill="#1c1c88" stroke="#1c1c88">
<text x="872.4" y="436.8">Model=Q34MOD</text>
<text x="872.4" y="454.2">Trise=</text>
<text x="872.4" y="471.6">Mode=nonlinear</text>
</g></g>
<!-- param sweep boxes -->
<defs>
<g id="psicon" stroke-linejoin="round">
<path d="M12 11.5L16 9.5L19.5 11V13.5L15.5 15L12 13.5Z" fill="#ece9e8" stroke="#0000cc" stroke-width="1.3"/>
<path d="M12.5 13.5L15.5 15L17.5 14L17 16.5L13.5 17Z" fill="#0000cc"/>
<path d="M27 11L30.5 9.5L34.5 11.5V14L31 15.5L27 14Z" fill="#ece9e8" stroke="#0000cc" stroke-width="1.3"/>
<path d="M30 14L34.5 12V14.5L31 16Z" fill="#0000cc"/>
<path d="M8.5 16.5L12 15L14.5 16V21L9 22.5Z" fill="#ece9e8" stroke="#0000cc" stroke-width="1.3"/>
<path d="M9 18.5L14 19V21.5L9.5 22.5Z" fill="#0000cc"/>
<path d="M9.5 23L16 21L21 23V29L16 31L12 30L9.5 28Z" fill="#0000cc"/>
<path d="M9.5 23L12 24V30L9.5 28Z" fill="#ece9e8" stroke="#0000cc" stroke-width="1"/>
<path d="M25.5 21L31 17.5L36.5 20L37.5 23.5L34 28L29 29.5L25.5 27Z" fill="#0000cc"/>
<rect x="20.5" y="27" width="5" height="7" fill="#ece9e8" stroke="#0000cc" stroke-width="1.3"/>
<path d="M33.5 29.5H39V32.5H34Z" fill="#ece9e8" stroke="#0000cc" stroke-width="1.3"/>
<path d="M19.3 8V17L23 19L26.5 17V8" fill="#ece9e8" stroke="#0000cc" stroke-width="1.3"/>
<path d="M23 9.5H26.5V17L23 19Z" fill="#0000cc"/>
<ellipse cx="22.9" cy="7.8" rx="3.7" ry="1.8" fill="#ece9e8" stroke="#0000cc" stroke-width="1.3"/>
<path d="M35 14L47.5 4" stroke="#0000cc" stroke-width="1.3" fill="none"/>
<path d="M47.5 13L43 18L43.5 23.5L39 29" stroke="#0000cc" stroke-width="1.3" fill="none"/>
<path d="M47.5 13.5V16L44 20L43 18Z" fill="#0000cc"/>
<path d="M44 23L44 26.5L39 32.5V29Z" fill="#0000cc"/>
</g>
</defs>
<g id="ps1">
<rect x="569" y="545" width="255" height="35" fill="#0000cc"/>
<rect x="565" y="541" width="254" height="35" fill="#ece9e8" stroke="#0000cc" stroke-width="2"/>
<path d="M614.5 541V576" stroke="#0000cc" stroke-width="2"/>
<use href="#psicon" x="564" y="540"/>
<text x="634" y="563.7" font-size="16.55" fill="#111" stroke="#111">PARAMETER SWEEP</text>
</g>
<g>
<rect x="834" y="545" width="256" height="35" fill="#0000cc"/>
<rect x="830" y="541" width="255" height="35" fill="#ece9e8" stroke="#0000cc" stroke-width="2"/>
<path d="M878.5 541V576" stroke="#0000cc" stroke-width="2"/>
<use href="#psicon" x="829" y="540"/>
<text x="899" y="563.7" font-size="16.55" fill="#111" stroke="#111">PARAMETER SWEEP</text>
</g>
<g>
<rect x="1104.5" y="538.5" width="263" height="45" rx="3" fill="#7a7a72"/>
<rect x="1111" y="545" width="255" height="35" fill="#0000cc"/>
<rect x="1107" y="541" width="255" height="35" fill="#ece9e8" stroke="#0000cc" stroke-width="2"/>
<path d="M1155 541V576" stroke="#0000cc" stroke-width="2"/>
<use href="#psicon" x="1106" y="540.5"/>
<text x="1175" y="563.7" font-size="16.55" fill="#111" stroke="#111">PARAMETER SWEEP</text>
</g>
<g font-size="11.7"><text x="578" y="595.5" fill="#4a9fe6" stroke="#4a9fe6">ParamSweep</text><text x="578" y="609.9" fill="#1a1ad6" stroke="#1a1ad6">Sweep1</text><g fill="#1c1c88" stroke="#1c1c88">
<text x="578" y="624.2">SweepVar=&quot;VCE&quot;</text>
<text x="578" y="638.6">SimInstanceName[1]=&quot;DC1&quot;</text>
<text x="578" y="652.9">SimInstanceName[2]=</text>
<text x="578" y="667.3">SimInstanceName[3]=</text>
<text x="578" y="681.7">SimInstanceName[4]=</text>
<text x="578" y="696.0">SimInstanceName[5]=</text>
<text x="578" y="710.4">SimInstanceName[6]=</text>
<text x="578" y="724.7">Start=</text>
<text x="578" y="739.1">Stop=</text>
<text x="578" y="753.5">Step=</text>
</g></g>
<g font-size="11.7"><text x="844" y="595.5" fill="#4a9fe6" stroke="#4a9fe6">ParamSweep</text><text x="844" y="609.9" fill="#1a1ad6" stroke="#1a1ad6">Sweep2</text><g fill="#1c1c88" stroke="#1c1c88">
<text x="844" y="624.2">SweepVar=&quot;VCE&quot;</text>
<text x="844" y="638.6">SimInstanceName[1]=&quot;DC1&quot;</text>
<text x="844" y="652.9">SimInstanceName[2]=</text>
<text x="844" y="667.3">SimInstanceName[3]=</text>
<text x="844" y="681.7">SimInstanceName[4]=</text>
<text x="844" y="696.0">SimInstanceName[5]=</text>
<text x="844" y="710.4">SimInstanceName[6]=</text>
<text x="844" y="724.7">Start=</text>
<text x="844" y="739.1">Stop=</text>
<text x="844" y="753.5">Step=</text>
</g></g>
<g font-size="11.7"><text x="1120" y="595.5" fill="#4a9fe6" stroke="#4a9fe6">ParamSweep</text><text x="1120" y="609.9" fill="#1a1ad6" stroke="#1a1ad6">Sweep3</text><g fill="#1c1c88" stroke="#1c1c88">
<text x="1120" y="624.2">SweepVar=&quot;VCE&quot;</text>
<text x="1120" y="638.6">SimInstanceName[1]=&quot;DC1&quot;</text>
<text x="1120" y="652.9">SimInstanceName[2]=</text>
<text x="1120" y="667.3">SimInstanceName[3]=</text>
<text x="1120" y="681.7">SimInstanceName[4]=</text>
<text x="1120" y="696.0">SimInstanceName[5]=</text>
<text x="1120" y="710.4">SimInstanceName[6]=</text>
<text x="1120" y="724.7">Start=</text>
<text x="1120" y="739.1">Stop=</text>
<text x="1120" y="753.5">Step=</text>
</g></g>
</svg>

</div>

<div class="a" id="status"></div>

<div class="a" id="task"></div>
<!-- scrollbars -->
<div class="a" style="left:1425px;top:119px;width:15px;height:729px;background-color:#e6e3df;background-image:repeating-conic-gradient(#dcd9d4 0 25%,#f3f1ef 0 50%);background-size:2px 2px"></div>
<div class="a" style="left:143px;top:848px;width:1282px;height:14px;background-color:#e6e3df;background-image:repeating-conic-gradient(#dcd9d4 0 25%,#f3f1ef 0 50%);background-size:2px 2px"></div>
<div class="a" style="left:1426px;top:120px;width:13px;height:13px;background:#d6d2cd;border-top:1px solid #fbfaf8;border-left:1px solid #fbfaf8;border-right:1px solid #222;border-bottom:1px solid #222"></div>
<svg style="left:1429px;top:124px" width="7" height="5"><path d="M0 4.5h7L3.5 0z" fill="#111"/></svg>
<div class="a" style="left:1426px;top:452px;width:14px;height:65px;background:#d6d2cd;border-top:1px solid #fbfaf8;border-left:1px solid #fbfaf8;border-right:2px solid #111;border-bottom:2px solid #111"></div>
<div class="a" style="left:1426px;top:835px;width:13px;height:13px;background:#d6d2cd;border-top:1px solid #fbfaf8;border-left:1px solid #fbfaf8;border-right:1px solid #222;border-bottom:1px solid #222"></div>
<svg style="left:1429px;top:839px" width="7" height="5"><path d="M0 0h7L3.5 4.5z" fill="#111"/></svg>
<div class="a" style="left:143px;top:849px;width:14px;height:13px;background:#d6d2cd;border-top:1px solid #fbfaf8;border-left:1px solid #fbfaf8;border-right:1px solid #222;border-bottom:1px solid #222"></div>
<svg style="left:148px;top:852px" width="5" height="7"><path d="M4.5 0v7L0 3.5z" fill="#111"/></svg>
<div class="a" style="left:756px;top:849px;width:58px;height:13px;background:#d6d2cd;border-top:1px solid #fbfaf8;border-left:1px solid #fbfaf8;border-right:2px solid #111;border-bottom:2px solid #111"></div>
<div class="a" style="left:1412px;top:849px;width:14px;height:13px;background:#d6d2cd;border-top:1px solid #fbfaf8;border-left:1px solid #fbfaf8;border-right:1px solid #222;border-bottom:1px solid #222"></div>
<svg style="left:1418px;top:852px" width="5" height="7"><path d="M0 0v7L4.5 3.5z" fill="#111"/></svg>
<div class="a" style="left:1425px;top:848px;width:15px;height:14px;background:#d6d2cd"></div>

<!-- status -->
<div class="a" style="left:0;top:861px;width:143px;height:1px;background:#fbfaf8"></div><div class="a" style="left:0;top:862px;width:1440px;height:1px;background:#cfcbc6"></div>
<div class="a" style="left:0;top:864px;width:939px;height:14px;border-top:1px solid #6e6b66;border-left:1px solid #6e6b66;border-bottom:1px solid #fbfaf8"></div>
<div class="t" style="left:5px;top:865px;font-size:12px;color:#111;letter-spacing:0.1px">Edit Parm: Enter component location</div>
<div class="a" style="left:940px;top:864px;width:123px;height:14px;border-top:1px solid #6e6b66;border-left:1px solid #6e6b66;border-bottom:1px solid #fbfaf8;border-right:1px solid #fbfaf8"></div>
<div class="t" style="left:945px;top:865px;font-size:11.6px;color:#111">ParamSweep Sweep3</div>
<div class="a" style="left:1064px;top:864px;width:112px;height:14px;border-top:1px solid #6e6b66;border-left:1px solid #6e6b66;border-bottom:1px solid #fbfaf8;border-right:1px solid #fbfaf8"></div>
<div class="t" style="left:1070px;top:865px;font-size:11.8px;color:#1a1ad0">ads_device:drawing</div>
<div class="a" style="left:1178px;top:864px;width:116px;height:14px;border-top:1px solid #6e6b66;border-left:1px solid #6e6b66;border-bottom:1px solid #fbfaf8;border-right:1px solid #fbfaf8"></div>
<div class="t" style="left:1183px;top:865px;font-size:12px;color:#111;letter-spacing:0.3px">-2.625, 0.625</div>
<div class="a" style="left:1296px;top:864px;width:115px;height:14px;border-top:1px solid #6e6b66;border-left:1px solid #6e6b66;border-bottom:1px solid #fbfaf8;border-right:1px solid #fbfaf8"></div>
<div class="t" style="left:1300px;top:865px;font-size:12px;color:#111;letter-spacing:0.3px">-7.500, 1.625</div>
<div class="a" style="left:1412px;top:864px;width:26px;height:14px;border-top:1px solid #6e6b66;border-left:1px solid #6e6b66;border-bottom:1px solid #fbfaf8;border-right:1px solid #fbfaf8"></div>
<div class="t" style="left:1417px;top:865px;font-size:12px;color:#111">in</div>
<!-- taskbar -->
<div class="a" style="left:1px;top:880px;width:20px;height:19px;border:1px solid #cfcdc8;border-radius:3px;background:#f4f3f1"></div>
<svg style="left:4px;top:884px" width="14" height="11" viewBox="0 0 14 11"><rect x="0" y="0" width="14" height="11" fill="#3a5a2a"/><rect x="1" y="1" width="12" height="9" fill="#8aa85a"/><rect x="1" y="1" width="12" height="1" fill="#e8d8a0"/><rect x="1.5" y="3" width="2" height="2" fill="#eee"/><rect x="1.5" y="6.5" width="2" height="2" fill="#eee"/></svg>
<svg style="left:25px;top:886px" width="4" height="8"><path d="M0 1h3M0 4h3M0 7h3" stroke="#c4c2bd"/></svg>
<div class="a" style="left:32px;top:880px;width:141px;height:19px;background:#eceae7;border:1px solid #cfcdc8;border-radius:3px"></div>
<svg style="left:38px;top:883px" width="14" height="13" viewBox="0 0 14 13"><rect x="0" y="1" width="14" height="11" rx="1" fill="#8a8a86"/><path d="M2.5 3.5l3 2.5-3 2.5" stroke="#ddd" fill="none"/><path d="M6 9h3" stroke="#ccc"/></svg>
<svg style="left:59px;top:881px" width="49" height="16"><text x="0" y="11.5" font-size="10.6" fill="#2a2a44" font-family="Liberation Sans" textLength="45.5" lengthAdjust="spacingAndGlyphs">[Terminal]</text></svg>
<div class="a" style="left:176px;top:880px;width:141px;height:19px;background:#eceae7;border:1px solid #cfcdc8;border-radius:3px"></div>
<svg style="left:182px;top:883px" width="14" height="13" viewBox="0 0 14 13"><rect x="0" y="0" width="14" height="11" fill="#222"/><path d="M2 1v9M5 1v9M8 1v9M11 1v9" stroke="#ddd" stroke-width="0.8"/><rect x="0" y="11" width="14" height="2" fill="#d01a5a"/></svg>
<svg style="left:203px;top:881px" width="109" height="16"><text x="0" y="11.5" font-size="10.6" fill="#2a2a44" font-family="Liberation Sans" textLength="105" lengthAdjust="spacingAndGlyphs">Advanced Design Syst…</text></svg>
<div class="a" style="left:320px;top:880px;width:142px;height:19px;background:#eceae7;border:1px solid #cfcdc8;border-radius:3px"></div>
<svg style="left:326px;top:883px" width="14" height="13" viewBox="0 0 14 13"><rect x="2" y="0" width="10" height="13" fill="#f0efec" stroke="#ddd"/></svg>
<svg style="left:347px;top:881px" width="107" height="16"><text x="0" y="11.5" font-size="10.6" fill="#2a2a44" font-family="Liberation Sans" textLength="103" lengthAdjust="spacingAndGlyphs">[ADSDC_15052018_tas…</text></svg>
<div class="a" style="left:465px;top:880px;width:141px;height:19px;background:#8fc3ea;border:1px solid #7ab0dc;border-radius:3px"></div>
<svg style="left:471px;top:883px" width="14" height="13" viewBox="0 0 14 13"><rect x="0" y="0" width="6" height="6" fill="#fff" stroke="#3a3ab0" stroke-width="0.8"/><rect x="0" y="7" width="6" height="6" fill="#fff" stroke="#3a3ab0" stroke-width="0.8"/><path d="M7 3h6" stroke="#222" stroke-width="1.5"/></svg>
<svg style="left:492px;top:881px" width="109" height="16"><text x="0" y="11.5" font-size="10.6" fill="#2a2a44" font-family="Liberation Sans" textLength="105" lengthAdjust="spacingAndGlyphs">DC_OP_POINT [LNA_li…</text></svg>
<div class="a" style="left:609px;top:880px;width:140px;height:19px;background:#eceae7;border:1px solid #cfcdc8;border-radius:3px"></div>
<svg style="left:615px;top:883px" width="14" height="13" viewBox="0 0 14 13"><rect x="0" y="0" width="14" height="13" fill="#eef" stroke="#8a8ab0"/><path d="M2 3h10M2 6h10M2 9h10" stroke="#6a6ab0"/></svg>
<svg style="left:636px;top:881px" width="77" height="16"><text x="0" y="11.5" font-size="10.6" fill="#2a2a44" font-family="Liberation Sans" textLength="73" lengthAdjust="spacingAndGlyphs">[hpeesofsim 8:0]</text></svg>
<div class="a" style="left:752px;top:880px;width:141px;height:19px;background:#eceae7;border:1px solid #cfcdc8;border-radius:3px"></div>
<svg style="left:758px;top:883px" width="14" height="13" viewBox="0 0 14 13"><rect x="0" y="0" width="14" height="12" fill="#fff" stroke="#aaa" stroke-width="0.6"/><path d="M1 9l2-6 2 6 2-6 2 6 2-6 2 6" stroke="#3a6ab0" fill="none"/></svg>
<svg style="left:779px;top:881px" width="107" height="16"><text x="0" y="11.5" font-size="10.6" fill="#2a2a44" font-family="Liberation Sans" textLength="103" lengthAdjust="spacingAndGlyphs">[DC_OP_POINT* [pag…</text></svg>
<div class="a" style="left:896px;top:880px;width:141px;height:19px;background:#eceae7;border:1px solid #cfcdc8;border-radius:3px"></div>
<svg style="left:902px;top:883px" width="14" height="13" viewBox="0 0 14 13"><circle cx="7" cy="6.5" r="6" fill="#e8602a"/><circle cx="7.5" cy="6" r="3.8" fill="#6a5aa8"/></svg>
<svg style="left:923px;top:881px" width="109" height="16"><text x="0" y="11.5" font-size="10.6" fill="#2a2a44" font-family="Liberation Sans" textLength="105.5" lengthAdjust="spacingAndGlyphs">[Task7 - Google Drive …</text></svg>
<!-- dialog shadow -->
<div class="a" style="left:268px;top:365px;width:280px;height:356px;border-radius:6px 6px 0 0;box-shadow:0 2px 8px 4px rgba(0,0,0,0.5)"></div>
<div class="a" style="left:268px;top:365px;width:280px;height:356px;background:#d6d2cd;border-radius:6px 6px 0 0;overflow:hidden">
 <div class="a" style="left:0;top:0;width:280px;height:20px;background:#3c3b37"></div>
</div>
<svg style="left:279px;top:369px" width="13" height="13" viewBox="0 0 13 13"><circle cx="6.5" cy="6.3" r="4.6" fill="#2a2a27"/><circle cx="6.5" cy="6.3" r="2.7" fill="#dad8d3"/><path d="M2.8 10.8q3.7 1.8 7.4 0" stroke="#6a6863" fill="none" stroke-width="0.8"/></svg>
<div class="t" style="left:303px;top:370px;font-size:10px;color:#dcd9d2;letter-spacing:-0.1px">Parameter Sweep:1</div>
<svg style="left:525px;top:368px" width="15" height="15" viewBox="0 0 15 15"><circle cx="7.5" cy="7.5" r="6.8" fill="#df5f2b"/><path d="M5 5l5 5M10 5l-5 5" stroke="#3a2a20" stroke-width="1.4"/></svg>
<div class="t" style="left:285px;top:395px;font-size:11.6px;color:#1a1a1a">ParamSweep Instance Name</div>
<div class="a" style="left:285px;top:408px;width:246px;height:16px;background:#fff;border-top:2px solid #222;border-left:2px solid #222;border-bottom:1px solid #f0eeea;border-right:1px solid #f0eeea"></div>
<div class="t" style="left:290px;top:411px;font-size:11.6px;color:#111">Sweep3</div>
<!-- tabs -->
<div class="a" style="left:286px;top:445px;width:245px;height:230px;border-top:1px solid #fbfaf8;border-left:1px solid #fbfaf8;border-right:2px solid #222;border-bottom:2px solid #222"></div>
<div class="a" style="left:286px;top:428px;width:55px;height:19px;background:#d6d2cd;border-top:1px solid #fbfaf8;border-left:1px solid #fbfaf8;border-right:2px solid #222;border-radius:3px 0 0 0"></div>
<div class="a" style="left:341px;top:430px;width:83px;height:15px;background:#d6d2cd;border-top:1px solid #fbfaf8;border-right:2px solid #222"></div>
<div class="a" style="left:424px;top:430px;width:57px;height:15px;background:#d6d2cd;border-top:1px solid #fbfaf8;border-left:1px solid #fbfaf8;border-right:2px solid #222"></div>
<div class="t" style="left:296px;top:431px;font-size:11.6px;color:#1a1a1a">Sweep</div>
<div class="t" style="left:352px;top:432px;font-size:11.6px;color:#1a1a1a">Simulations</div>
<div class="t" style="left:433px;top:432px;font-size:11.6px;color:#1a1a1a">Display</div>
<!-- param to sweep -->
<div class="t" style="left:299px;top:459px;font-size:11.6px;color:#1a1a1a;letter-spacing:0.2px">Parameter to sweep</div>
<div class="a" style="left:415px;top:457px;width:65px;height:16px;background:#fff;border-top:2px solid #222;border-left:2px solid #222;border-bottom:1px solid #f0eeea;border-right:1px solid #f0eeea"></div>
<div class="t" style="left:418px;top:460px;font-size:11.6px;color:#111">VCE</div>
<!-- group -->
<div class="a" style="left:297px;top:483px;width:223px;height:156px;border:1px solid #a09d98;box-shadow:inset 1px 1px 0 #fbfaf8, 1px 1px 0 #fbfaf8"></div>
<div class="a" style="left:302px;top:479px;width:98px;height:10px;background:#d6d2cd"></div>
<div class="t" style="left:304px;top:477px;font-size:11.6px;color:#1a1a1a;letter-spacing:0.2px">Parameter sweep</div>
<div class="t" style="left:322px;top:498px;font-size:11.6px;color:#1a1a1a">Sweep Type</div>
<div class="a" style="left:418px;top:496px;width:86px;height:16px;background:#fff;border-top:2px solid #222;border-left:2px solid #222;border-bottom:1px solid #f0eeea;border-right:1px solid #f0eeea"></div>
<div class="t" style="left:421px;top:498px;font-size:11.6px;color:#111">Single point</div>
<div class="a" style="left:490px;top:498px;width:14px;height:13px;background:#d6d2cd;border-left:1px solid #fbfaf8;border-top:1px solid #fbfaf8;border-right:2px solid #222;border-bottom:2px solid #222"></div>
<svg style="left:493px;top:502px" width="7" height="5"><path d="M0 0h7l-3.5 4z" fill="#111"/></svg>
<!-- inner frame -->
<div class="a" style="left:302px;top:517px;width:212px;height:118px;border:1px solid #a09d98;box-shadow:inset 1px 1px 0 #fbfaf8, 1px 1px 0 #fbfaf8"></div>
<svg style="left:325px;top:522px" width="11" height="11" viewBox="0 0 11 11"><circle cx="5.5" cy="5.5" r="4.5" fill="#d6d2cd" stroke="#a8a59f" stroke-width="1.2"/><path d="M2 8.5A4.5 4.5 0 0 1 8.5 2" stroke="#fbfaf8" stroke-width="1.2" fill="none"/><circle cx="5.5" cy="5.5" r="1.8" fill="#8e8b85"/></svg>
<div class="t" style="left:342px;top:523px;font-size:11.6px;color:#8e8b85">Start/Stop</div>
<svg style="left:401px;top:522px" width="11" height="11" viewBox="0 0 11 11"><circle cx="5.5" cy="5.5" r="4.5" fill="#d6d2cd" stroke="#a8a59f" stroke-width="1.2"/><path d="M2 8.5A4.5 4.5 0 0 1 8.5 2" stroke="#fbfaf8" stroke-width="1.2" fill="none"/></svg>
<div class="t" style="left:417px;top:523px;font-size:11.6px;color:#8e8b85">Center/Span</div>
<div class="t" style="left:311px;top:544px;font-size:11.6px;color:#1a1a1a;letter-spacing:0.2px">Parameter</div>
<div class="a" style="left:383px;top:542px;width:64px;height:16px;background:#fff;border-top:2px solid #222;border-left:2px solid #222;border-bottom:1px solid #f0eeea;border-right:1px solid #f0eeea"></div>
<div class="t" style="left:386px;top:544px;font-size:11.6px;color:#111">1.5 V</div>
<div class="a" style="left:451px;top:542px;width:56px;height:16px;background:#fff;border-top:2px solid #222;border-left:2px solid #222;border-bottom:1px solid #f0eeea;border-right:1px solid #f0eeea"></div>
<div class="t" style="left:454px;top:544px;font-size:11.6px;color:#111">None</div>
<div class="a" style="left:493px;top:544px;width:14px;height:13px;background:#d6d2cd;border-left:1px solid #fbfaf8;border-top:1px solid #fbfaf8;border-right:2px solid #222;border-bottom:2px solid #222"></div>
<svg style="left:496px;top:548px" width="7" height="5"><path d="M0 0h7l-3.5 4z" fill="#111"/></svg>
<!-- stop -->
<div class="t" style="left:311px;top:566px;font-size:11.6px;color:#8e8b85">Stop</div>
<div class="a" style="left:383px;top:563px;width:64px;height:16px;background:#d6d2cd;border-top:2px solid #222;border-left:2px solid #222;border-bottom:1px solid #f0eeea;border-right:1px solid #f0eeea"></div>
<div class="t" style="left:386px;top:566px;font-size:11.6px;color:#8e8b85">10</div>
<div class="a" style="left:451px;top:563px;width:56px;height:16px;background:#d6d2cd;border-top:2px solid #222;border-left:2px solid #222;border-bottom:1px solid #f0eeea;border-right:1px solid #f0eeea"></div>
<div class="t" style="left:454px;top:566px;font-size:11.6px;color:#8e8b85">None</div>
<div class="a" style="left:493px;top:565px;width:14px;height:13px;background:#d6d2cd;border-left:1px solid #fbfaf8;border-top:1px solid #fbfaf8;border-right:2px solid #222;border-bottom:2px solid #222"></div>
<svg style="left:496px;top:569px" width="7" height="5"><path d="M0 0h7l-3.5 4z" fill="#9a978f"/></svg>
<!-- step -->
<div class="t" style="left:311px;top:587px;font-size:11.6px;color:#8e8b85">Step-size</div>
<div class="a" style="left:383px;top:584px;width:64px;height:16px;background:#d6d2cd;border-top:2px solid #222;border-left:2px solid #222;border-bottom:1px solid #f0eeea;border-right:1px solid #f0eeea"></div>
<div class="t" style="left:386px;top:587px;font-size:11.6px;color:#8e8b85">1</div>
<div class="a" style="left:451px;top:584px;width:56px;height:16px;background:#d6d2cd;border-top:2px solid #222;border-left:2px solid #222;border-bottom:1px solid #f0eeea;border-right:1px solid #f0eeea"></div>
<div class="t" style="left:454px;top:587px;font-size:11.6px;color:#8e8b85">None</div>
<div class="a" style="left:493px;top:586px;width:14px;height:13px;background:#d6d2cd;border-left:1px solid #fbfaf8;border-top:1px solid #fbfaf8;border-right:2px solid #222;border-bottom:2px solid #222"></div>
<svg style="left:496px;top:590px" width="7" height="5"><path d="M0 0h7l-3.5 4z" fill="#9a978f"/></svg>
<!-- num pts -->
<div class="t" style="left:311px;top:608px;font-size:11.6px;color:#8e8b85;letter-spacing:0.2px">Num. of pts.</div>
<div class="a" style="left:386px;top:609px;width:65px;height:17px;background:#d6d2cd;border-top:2px solid #444;border-left:2px solid #444;border-bottom:1px solid #f0eeea;border-right:1px solid #f0eeea"></div>
<!-- use sweep plan -->
<div class="a" style="left:298px;top:649px;width:11px;height:10px;background:#fff;border-top:2px solid #222;border-left:2px solid #222;border-bottom:1px solid #f0eeea;border-right:1px solid #f0eeea"></div>
<div class="t" style="left:313px;top:648px;font-size:11.6px;color:#1a1a1a;letter-spacing:0.2px">Use sweep plan</div>
<div class="a" style="left:406px;top:646px;width:85px;height:16px;background:#d6d2cd;border-top:2px solid #222;border-left:2px solid #222;border-bottom:1px solid #f0eeea;border-right:1px solid #f0eeea"></div>
<div class="a" style="left:477px;top:648px;width:14px;height:13px;background:#d6d2cd;border-left:1px solid #fbfaf8;border-top:1px solid #fbfaf8;border-right:2px solid #222;border-bottom:2px solid #222"></div>
<svg style="left:480px;top:652px" width="7" height="5"><path d="M0 0h7l-3.5 4z" fill="#9a978f"/></svg>
<!-- separator & buttons -->
<div class="a" style="left:273px;top:686px;width:271px;height:2px;border-top:1px solid #555;border-bottom:1px solid #fbfaf8"></div>
<div class="a" style="left:276px;top:693px;width:64px;height:21px;background:#d6d2cd;border-top:1px solid #fbfaf8;border-left:1px solid #fbfaf8;border-right:2px solid #222;border-bottom:2px solid #222"></div>
<div class="a" style="left:343px;top:693px;width:64px;height:21px;background:#d6d2cd;border-top:1px solid #fbfaf8;border-left:1px solid #fbfaf8;border-right:2px solid #222;border-bottom:2px solid #222"></div>
<div class="a" style="left:410px;top:693px;width:64px;height:21px;background:#d6d2cd;border-top:1px solid #fbfaf8;border-left:1px solid #fbfaf8;border-right:2px solid #222;border-bottom:2px solid #222"></div>
<div class="a" style="left:476px;top:693px;width:65px;height:21px;background:#d6d2cd;border-top:1px solid #fbfaf8;border-left:1px solid #fbfaf8;border-right:2px solid #222;border-bottom:2px solid #222"></div>
<div class="t" style="left:276px;top:697px;width:64px;text-align:center;font-size:11.6px;color:#1a1a1a">OK</div>
<div class="t" style="left:343px;top:697px;width:64px;text-align:center;font-size:11.6px;color:#1a1a1a">Apply</div>
<div class="t" style="left:410px;top:697px;width:64px;text-align:center;font-size:11.6px;color:#1a1a1a">Cancel</div>
<div class="t" style="left:476px;top:697px;width:65px;text-align:center;font-size:11.6px;color:#1a1a1a">Help</div>
<!-- cursor -->
<svg style="left:420px;top:439px" width="11" height="17" viewBox="0 0 11 17"><path d="M0.5 0.5V14l3.2-3 2.6 5.5 2-1-2.5-5.2h4.4z" fill="#fff" stroke="#111" stroke-width="1"/></svg>

<svg style="left:1370px;top:3px" width="67" height="82" viewBox="0 0 67 82" shape-rendering="crispEdges"><path d="M0 0H67V82H0ZM2.00 1.00h2.21v2.21h-2.21zM4.21 1.00h2.21v2.21h-2.21zM6.41 1.00h2.21v2.21h-2.21zM8.62 1.00h2.21v2.21h-2.21zM10.83 1.00h2.21v2.21h-2.21zM13.03 1.00h2.21v2.21h-2.21zM15.24 1.00h2.21v2.21h-2.21zM26.28 1.00h2.21v2.21h-2.21zM28.48 1.00h2.21v2.21h-2.21zM30.69 1.00h2.21v2.21h-2.21zM37.31 1.00h2.21v2.21h-2.21zM39.52 1.00h2.21v2.21h-2.21zM41.72 1.00h2.21v2.21h-2.21zM50.55 1.00h2.21v2.21h-2.21zM52.76 1.00h2.21v2.21h-2.21zM54.97 1.00h2.21v2.21h-2.21zM57.17 1.00h2.21v2.21h-2.21zM59.38 1.00h2.21v2.21h-2.21zM61.59 1.00h2.21v2.21h-2.21zM63.79 1.00h2.21v2.21h-2.21zM2.00 3.21h2.21v2.21h-2.21zM15.24 3.21h2.21v2.21h-2.21zM28.48 3.21h2.21v2.21h-2.21zM30.69 3.21h2.21v2.21h-2.21zM32.90 3.21h2.21v2.21h-2.21zM35.10 3.21h2.21v2.21h-2.21zM37.31 3.21h2.21v2.21h-2.21zM39.52 3.21h2.21v2.21h-2.21zM43.93 3.21h2.21v2.21h-2.21zM50.55 3.21h2.21v2.21h-2.21zM63.79 3.21h2.21v2.21h-2.21zM2.00 5.41h2.21v2.21h-2.21zM6.41 5.41h2.21v2.21h-2.21zM8.62 5.41h2.21v2.21h-2.21zM10.83 5.41h2.21v2.21h-2.21zM15.24 5.41h2.21v2.21h-2.21zM19.66 5.41h2.21v2.21h-2.21zM21.86 5.41h2.21v2.21h-2.21zM24.07 5.41h2.21v2.21h-2.21zM28.48 5.41h2.21v2.21h-2.21zM37.31 5.41h2.21v2.21h-2.21zM39.52 5.41h2.21v2.21h-2.21zM46.14 5.41h2.21v2.21h-2.21zM50.55 5.41h2.21v2.21h-2.21zM54.97 5.41h2.21v2.21h-2.21zM57.17 5.41h2.21v2.21h-2.21zM59.38 5.41h2.21v2.21h-2.21zM63.79 5.41h2.21v2.21h-2.21zM2.00 7.62h2.21v2.21h-2.21zM6.41 7.62h2.21v2.21h-2.21zM8.62 7.62h2.21v2.21h-2.21zM10.83 7.62h2.21v2.21h-2.21zM15.24 7.62h2.21v2.21h-2.21zM19.66 7.62h2.21v2.21h-2.21zM26.28 7.62h2.21v2.21h-2.21zM28.48 7.62h2.21v2.21h-2.21zM35.10 7.62h2.21v2.21h-2.21zM37.31 7.62h2.21v2.21h-2.21zM43.93 7.62h2.21v2.21h-2.21zM46.14 7.62h2.21v2.21h-2.21zM50.55 7.62h2.21v2.21h-2.21zM54.97 7.62h2.21v2.21h-2.21zM57.17 7.62h2.21v2.21h-2.21zM59.38 7.62h2.21v2.21h-2.21zM63.79 7.62h2.21v2.21h-2.21zM2.00 9.83h2.21v2.21h-2.21zM6.41 9.83h2.21v2.21h-2.21zM8.62 9.83h2.21v2.21h-2.21zM10.83 9.83h2.21v2.21h-2.21zM15.24 9.83h2.21v2.21h-2.21zM26.28 9.83h2.21v2.21h-2.21zM28.48 9.83h2.21v2.21h-2.21zM32.90 9.83h2.21v2.21h-2.21zM35.10 9.83h2.21v2.21h-2.21zM37.31 9.83h2.21v2.21h-2.21zM39.52 9.83h2.21v2.21h-2.21zM41.72 9.83h2.21v2.21h-2.21zM50.55 9.83h2.21v2.21h-2.21zM54.97 9.83h2.21v2.21h-2.21zM57.17 9.83h2.21v2.21h-2.21zM59.38 9.83h2.21v2.21h-2.21zM63.79 9.83h2.21v2.21h-2.21zM2.00 12.03h2.21v2.21h-2.21zM15.24 12.03h2.21v2.21h-2.21zM19.66 12.03h2.21v2.21h-2.21zM26.28 12.03h2.21v2.21h-2.21zM35.10 12.03h2.21v2.21h-2.21zM39.52 12.03h2.21v2.21h-2.21zM43.93 12.03h2.21v2.21h-2.21zM50.55 12.03h2.21v2.21h-2.21zM63.79 12.03h2.21v2.21h-2.21zM2.00 14.24h2.21v2.21h-2.21zM4.21 14.24h2.21v2.21h-2.21zM6.41 14.24h2.21v2.21h-2.21zM8.62 14.24h2.21v2.21h-2.21zM10.83 14.24h2.21v2.21h-2.21zM13.03 14.24h2.21v2.21h-2.21zM15.24 14.24h2.21v2.21h-2.21zM21.86 14.24h2.21v2.21h-2.21zM30.69 14.24h2.21v2.21h-2.21zM39.52 14.24h2.21v2.21h-2.21zM50.55 14.24h2.21v2.21h-2.21zM52.76 14.24h2.21v2.21h-2.21zM54.97 14.24h2.21v2.21h-2.21zM57.17 14.24h2.21v2.21h-2.21zM59.38 14.24h2.21v2.21h-2.21zM61.59 14.24h2.21v2.21h-2.21zM63.79 14.24h2.21v2.21h-2.21zM19.66 16.45h2.21v2.21h-2.21zM21.86 16.45h2.21v2.21h-2.21zM24.07 16.45h2.21v2.21h-2.21zM30.69 16.45h2.21v2.21h-2.21zM35.10 16.45h2.21v2.21h-2.21zM37.31 16.45h2.21v2.21h-2.21zM39.52 16.45h2.21v2.21h-2.21zM41.72 16.45h2.21v2.21h-2.21zM43.93 16.45h2.21v2.21h-2.21zM4.21 18.66h2.21v2.21h-2.21zM10.83 18.66h2.21v2.21h-2.21zM13.03 18.66h2.21v2.21h-2.21zM26.28 18.66h2.21v2.21h-2.21zM30.69 18.66h2.21v2.21h-2.21zM32.90 18.66h2.21v2.21h-2.21zM39.52 18.66h2.21v2.21h-2.21zM46.14 18.66h2.21v2.21h-2.21zM48.34 18.66h2.21v2.21h-2.21zM50.55 18.66h2.21v2.21h-2.21zM52.76 18.66h2.21v2.21h-2.21zM57.17 18.66h2.21v2.21h-2.21zM2.00 20.86h2.21v2.21h-2.21zM6.41 20.86h2.21v2.21h-2.21zM8.62 20.86h2.21v2.21h-2.21zM10.83 20.86h2.21v2.21h-2.21zM15.24 20.86h2.21v2.21h-2.21zM17.45 20.86h2.21v2.21h-2.21zM19.66 20.86h2.21v2.21h-2.21zM21.86 20.86h2.21v2.21h-2.21zM26.28 20.86h2.21v2.21h-2.21zM28.48 20.86h2.21v2.21h-2.21zM35.10 20.86h2.21v2.21h-2.21zM39.52 20.86h2.21v2.21h-2.21zM46.14 20.86h2.21v2.21h-2.21zM48.34 20.86h2.21v2.21h-2.21zM50.55 20.86h2.21v2.21h-2.21zM54.97 20.86h2.21v2.21h-2.21zM59.38 20.86h2.21v2.21h-2.21zM4.21 23.07h2.21v2.21h-2.21zM8.62 23.07h2.21v2.21h-2.21zM13.03 23.07h2.21v2.21h-2.21zM15.24 23.07h2.21v2.21h-2.21zM19.66 23.07h2.21v2.21h-2.21zM21.86 23.07h2.21v2.21h-2.21zM28.48 23.07h2.21v2.21h-2.21zM30.69 23.07h2.21v2.21h-2.21zM32.90 23.07h2.21v2.21h-2.21zM41.72 23.07h2.21v2.21h-2.21zM46.14 23.07h2.21v2.21h-2.21zM54.97 23.07h2.21v2.21h-2.21zM59.38 23.07h2.21v2.21h-2.21zM61.59 23.07h2.21v2.21h-2.21zM2.00 25.28h2.21v2.21h-2.21zM4.21 25.28h2.21v2.21h-2.21zM8.62 25.28h2.21v2.21h-2.21zM15.24 25.28h2.21v2.21h-2.21zM17.45 25.28h2.21v2.21h-2.21zM24.07 25.28h2.21v2.21h-2.21zM26.28 25.28h2.21v2.21h-2.21zM30.69 25.28h2.21v2.21h-2.21zM32.90 25.28h2.21v2.21h-2.21zM35.10 25.28h2.21v2.21h-2.21zM41.72 25.28h2.21v2.21h-2.21zM43.93 25.28h2.21v2.21h-2.21zM52.76 25.28h2.21v2.21h-2.21zM63.79 25.28h2.21v2.21h-2.21zM4.21 27.48h2.21v2.21h-2.21zM13.03 27.48h2.21v2.21h-2.21zM15.24 27.48h2.21v2.21h-2.21zM19.66 27.48h2.21v2.21h-2.21zM24.07 27.48h2.21v2.21h-2.21zM26.28 27.48h2.21v2.21h-2.21zM30.69 27.48h2.21v2.21h-2.21zM32.90 27.48h2.21v2.21h-2.21zM35.10 27.48h2.21v2.21h-2.21zM37.31 27.48h2.21v2.21h-2.21zM39.52 27.48h2.21v2.21h-2.21zM48.34 27.48h2.21v2.21h-2.21zM50.55 27.48h2.21v2.21h-2.21zM52.76 27.48h2.21v2.21h-2.21zM57.17 27.48h2.21v2.21h-2.21zM61.59 27.48h2.21v2.21h-2.21zM63.79 27.48h2.21v2.21h-2.21zM4.21 29.69h2.21v2.21h-2.21zM17.45 29.69h2.21v2.21h-2.21zM21.86 29.69h2.21v2.21h-2.21zM28.48 29.69h2.21v2.21h-2.21zM30.69 29.69h2.21v2.21h-2.21zM32.90 29.69h2.21v2.21h-2.21zM37.31 29.69h2.21v2.21h-2.21zM43.93 29.69h2.21v2.21h-2.21zM48.34 29.69h2.21v2.21h-2.21zM50.55 29.69h2.21v2.21h-2.21zM54.97 29.69h2.21v2.21h-2.21zM59.38 29.69h2.21v2.21h-2.21zM61.59 29.69h2.21v2.21h-2.21zM2.00 31.90h2.21v2.21h-2.21zM6.41 31.90h2.21v2.21h-2.21zM8.62 31.90h2.21v2.21h-2.21zM15.24 31.90h2.21v2.21h-2.21zM17.45 31.90h2.21v2.21h-2.21zM26.28 31.90h2.21v2.21h-2.21zM30.69 31.90h2.21v2.21h-2.21zM32.90 31.90h2.21v2.21h-2.21zM35.10 31.90h2.21v2.21h-2.21zM39.52 31.90h2.21v2.21h-2.21zM41.72 31.90h2.21v2.21h-2.21zM43.93 31.90h2.21v2.21h-2.21zM52.76 31.90h2.21v2.21h-2.21zM2.00 34.10h2.21v2.21h-2.21zM4.21 34.10h2.21v2.21h-2.21zM6.41 34.10h2.21v2.21h-2.21zM8.62 34.10h2.21v2.21h-2.21zM10.83 34.10h2.21v2.21h-2.21zM15.24 34.10h2.21v2.21h-2.21zM19.66 34.10h2.21v2.21h-2.21zM21.86 34.10h2.21v2.21h-2.21zM28.48 34.10h2.21v2.21h-2.21zM30.69 34.10h2.21v2.21h-2.21zM32.90 34.10h2.21v2.21h-2.21zM35.10 34.10h2.21v2.21h-2.21zM37.31 34.10h2.21v2.21h-2.21zM39.52 34.10h2.21v2.21h-2.21zM41.72 34.10h2.21v2.21h-2.21zM46.14 34.10h2.21v2.21h-2.21zM48.34 34.10h2.21v2.21h-2.21zM50.55 34.10h2.21v2.21h-2.21zM52.76 34.10h2.21v2.21h-2.21zM54.97 34.10h2.21v2.21h-2.21zM57.17 34.10h2.21v2.21h-2.21zM59.38 34.10h2.21v2.21h-2.21zM61.59 34.10h2.21v2.21h-2.21zM2.00 36.31h2.21v2.21h-2.21zM10.83 36.31h2.21v2.21h-2.21zM15.24 36.31h2.21v2.21h-2.21zM19.66 36.31h2.21v2.21h-2.21zM26.28 36.31h2.21v2.21h-2.21zM28.48 36.31h2.21v2.21h-2.21zM30.69 36.31h2.21v2.21h-2.21zM32.90 36.31h2.21v2.21h-2.21zM35.10 36.31h2.21v2.21h-2.21zM37.31 36.31h2.21v2.21h-2.21zM41.72 36.31h2.21v2.21h-2.21zM43.93 36.31h2.21v2.21h-2.21zM46.14 36.31h2.21v2.21h-2.21zM48.34 36.31h2.21v2.21h-2.21zM54.97 36.31h2.21v2.21h-2.21zM57.17 36.31h2.21v2.21h-2.21zM2.00 38.52h2.21v2.21h-2.21zM6.41 38.52h2.21v2.21h-2.21zM8.62 38.52h2.21v2.21h-2.21zM13.03 38.52h2.21v2.21h-2.21zM15.24 38.52h2.21v2.21h-2.21zM24.07 38.52h2.21v2.21h-2.21zM26.28 38.52h2.21v2.21h-2.21zM28.48 38.52h2.21v2.21h-2.21zM32.90 38.52h2.21v2.21h-2.21zM37.31 38.52h2.21v2.21h-2.21zM39.52 38.52h2.21v2.21h-2.21zM41.72 38.52h2.21v2.21h-2.21zM43.93 38.52h2.21v2.21h-2.21zM46.14 38.52h2.21v2.21h-2.21zM48.34 38.52h2.21v2.21h-2.21zM50.55 38.52h2.21v2.21h-2.21zM52.76 38.52h2.21v2.21h-2.21zM54.97 38.52h2.21v2.21h-2.21zM57.17 38.52h2.21v2.21h-2.21zM61.59 38.52h2.21v2.21h-2.21zM2.00 40.72h2.21v2.21h-2.21zM6.41 40.72h2.21v2.21h-2.21zM8.62 40.72h2.21v2.21h-2.21zM10.83 40.72h2.21v2.21h-2.21zM21.86 40.72h2.21v2.21h-2.21zM24.07 40.72h2.21v2.21h-2.21zM28.48 40.72h2.21v2.21h-2.21zM32.90 40.72h2.21v2.21h-2.21zM41.72 40.72h2.21v2.21h-2.21zM43.93 40.72h2.21v2.21h-2.21zM48.34 40.72h2.21v2.21h-2.21zM50.55 40.72h2.21v2.21h-2.21zM52.76 40.72h2.21v2.21h-2.21zM54.97 40.72h2.21v2.21h-2.21zM61.59 40.72h2.21v2.21h-2.21zM63.79 40.72h2.21v2.21h-2.21zM2.00 42.93h2.21v2.21h-2.21zM4.21 42.93h2.21v2.21h-2.21zM6.41 42.93h2.21v2.21h-2.21zM8.62 42.93h2.21v2.21h-2.21zM13.03 42.93h2.21v2.21h-2.21zM15.24 42.93h2.21v2.21h-2.21zM19.66 42.93h2.21v2.21h-2.21zM21.86 42.93h2.21v2.21h-2.21zM24.07 42.93h2.21v2.21h-2.21zM26.28 42.93h2.21v2.21h-2.21zM28.48 42.93h2.21v2.21h-2.21zM30.69 42.93h2.21v2.21h-2.21zM32.90 42.93h2.21v2.21h-2.21zM48.34 42.93h2.21v2.21h-2.21zM61.59 42.93h2.21v2.21h-2.21zM2.00 45.14h2.21v2.21h-2.21zM4.21 45.14h2.21v2.21h-2.21zM6.41 45.14h2.21v2.21h-2.21zM8.62 45.14h2.21v2.21h-2.21zM10.83 45.14h2.21v2.21h-2.21zM15.24 45.14h2.21v2.21h-2.21zM17.45 45.14h2.21v2.21h-2.21zM24.07 45.14h2.21v2.21h-2.21zM26.28 45.14h2.21v2.21h-2.21zM28.48 45.14h2.21v2.21h-2.21zM30.69 45.14h2.21v2.21h-2.21zM39.52 45.14h2.21v2.21h-2.21zM41.72 45.14h2.21v2.21h-2.21zM43.93 45.14h2.21v2.21h-2.21zM46.14 45.14h2.21v2.21h-2.21zM48.34 45.14h2.21v2.21h-2.21zM57.17 45.14h2.21v2.21h-2.21zM61.59 45.14h2.21v2.21h-2.21zM19.66 47.34h2.21v2.21h-2.21zM32.90 47.34h2.21v2.21h-2.21zM37.31 47.34h2.21v2.21h-2.21zM39.52 47.34h2.21v2.21h-2.21zM43.93 47.34h2.21v2.21h-2.21zM48.34 47.34h2.21v2.21h-2.21zM52.76 47.34h2.21v2.21h-2.21zM54.97 47.34h2.21v2.21h-2.21zM57.17 47.34h2.21v2.21h-2.21zM59.38 47.34h2.21v2.21h-2.21zM63.79 47.34h2.21v2.21h-2.21zM2.00 49.55h2.21v2.21h-2.21zM4.21 49.55h2.21v2.21h-2.21zM6.41 49.55h2.21v2.21h-2.21zM8.62 49.55h2.21v2.21h-2.21zM10.83 49.55h2.21v2.21h-2.21zM13.03 49.55h2.21v2.21h-2.21zM15.24 49.55h2.21v2.21h-2.21zM19.66 49.55h2.21v2.21h-2.21zM21.86 49.55h2.21v2.21h-2.21zM26.28 49.55h2.21v2.21h-2.21zM28.48 49.55h2.21v2.21h-2.21zM30.69 49.55h2.21v2.21h-2.21zM32.90 49.55h2.21v2.21h-2.21zM39.52 49.55h2.21v2.21h-2.21zM43.93 49.55h2.21v2.21h-2.21zM54.97 49.55h2.21v2.21h-2.21zM57.17 49.55h2.21v2.21h-2.21zM63.79 49.55h2.21v2.21h-2.21zM2.00 51.76h2.21v2.21h-2.21zM15.24 51.76h2.21v2.21h-2.21zM35.10 51.76h2.21v2.21h-2.21zM43.93 51.76h2.21v2.21h-2.21zM46.14 51.76h2.21v2.21h-2.21zM48.34 51.76h2.21v2.21h-2.21zM50.55 51.76h2.21v2.21h-2.21zM59.38 51.76h2.21v2.21h-2.21zM63.79 51.76h2.21v2.21h-2.21zM2.00 53.97h2.21v2.21h-2.21zM6.41 53.97h2.21v2.21h-2.21zM8.62 53.97h2.21v2.21h-2.21zM10.83 53.97h2.21v2.21h-2.21zM15.24 53.97h2.21v2.21h-2.21zM24.07 53.97h2.21v2.21h-2.21zM30.69 53.97h2.21v2.21h-2.21zM37.31 53.97h2.21v2.21h-2.21zM39.52 53.97h2.21v2.21h-2.21zM41.72 53.97h2.21v2.21h-2.21zM43.93 53.97h2.21v2.21h-2.21zM54.97 53.97h2.21v2.21h-2.21zM57.17 53.97h2.21v2.21h-2.21zM2.00 56.17h2.21v2.21h-2.21zM6.41 56.17h2.21v2.21h-2.21zM8.62 56.17h2.21v2.21h-2.21zM10.83 56.17h2.21v2.21h-2.21zM15.24 56.17h2.21v2.21h-2.21zM24.07 56.17h2.21v2.21h-2.21zM26.28 56.17h2.21v2.21h-2.21zM37.31 56.17h2.21v2.21h-2.21zM39.52 56.17h2.21v2.21h-2.21zM46.14 56.17h2.21v2.21h-2.21zM48.34 56.17h2.21v2.21h-2.21zM54.97 56.17h2.21v2.21h-2.21zM57.17 56.17h2.21v2.21h-2.21zM59.38 56.17h2.21v2.21h-2.21zM2.00 58.38h2.21v2.21h-2.21zM6.41 58.38h2.21v2.21h-2.21zM8.62 58.38h2.21v2.21h-2.21zM10.83 58.38h2.21v2.21h-2.21zM15.24 58.38h2.21v2.21h-2.21zM24.07 58.38h2.21v2.21h-2.21zM32.90 58.38h2.21v2.21h-2.21zM39.52 58.38h2.21v2.21h-2.21zM41.72 58.38h2.21v2.21h-2.21zM43.93 58.38h2.21v2.21h-2.21zM46.14 58.38h2.21v2.21h-2.21zM48.34 58.38h2.21v2.21h-2.21zM50.55 58.38h2.21v2.21h-2.21zM54.97 58.38h2.21v2.21h-2.21zM2.00 60.59h2.21v2.21h-2.21zM15.24 60.59h2.21v2.21h-2.21zM19.66 60.59h2.21v2.21h-2.21zM21.86 60.59h2.21v2.21h-2.21zM24.07 60.59h2.21v2.21h-2.21zM30.69 60.59h2.21v2.21h-2.21zM32.90 60.59h2.21v2.21h-2.21zM37.31 60.59h2.21v2.21h-2.21zM39.52 60.59h2.21v2.21h-2.21zM43.93 60.59h2.21v2.21h-2.21zM48.34 60.59h2.21v2.21h-2.21zM54.97 60.59h2.21v2.21h-2.21zM61.59 60.59h2.21v2.21h-2.21zM63.79 60.59h2.21v2.21h-2.21zM2.00 62.79h2.21v2.21h-2.21zM4.21 62.79h2.21v2.21h-2.21zM6.41 62.79h2.21v2.21h-2.21zM8.62 62.79h2.21v2.21h-2.21zM10.83 62.79h2.21v2.21h-2.21zM13.03 62.79h2.21v2.21h-2.21zM15.24 62.79h2.21v2.21h-2.21zM24.07 62.79h2.21v2.21h-2.21zM26.28 62.79h2.21v2.21h-2.21zM32.90 62.79h2.21v2.21h-2.21zM35.10 62.79h2.21v2.21h-2.21zM37.31 62.79h2.21v2.21h-2.21zM41.72 62.79h2.21v2.21h-2.21zM43.93 62.79h2.21v2.21h-2.21zM46.14 62.79h2.21v2.21h-2.21zM48.34 62.79h2.21v2.21h-2.21zM54.97 62.79h2.21v2.21h-2.21zM59.38 62.79h2.21v2.21h-2.21zM61.59 62.79h2.21v2.21h-2.21z" fill="rgba(228,228,226,0.56)" fill-rule="evenodd"/><path d="M2.00 1.00h2.21v2.21h-2.21zM4.21 1.00h2.21v2.21h-2.21zM6.41 1.00h2.21v2.21h-2.21zM8.62 1.00h2.21v2.21h-2.21zM10.83 1.00h2.21v2.21h-2.21zM13.03 1.00h2.21v2.21h-2.21zM15.24 1.00h2.21v2.21h-2.21zM26.28 1.00h2.21v2.21h-2.21zM28.48 1.00h2.21v2.21h-2.21zM30.69 1.00h2.21v2.21h-2.21zM37.31 1.00h2.21v2.21h-2.21zM39.52 1.00h2.21v2.21h-2.21zM41.72 1.00h2.21v2.21h-2.21zM50.55 1.00h2.21v2.21h-2.21zM52.76 1.00h2.21v2.21h-2.21zM54.97 1.00h2.21v2.21h-2.21zM57.17 1.00h2.21v2.21h-2.21zM59.38 1.00h2.21v2.21h-2.21zM61.59 1.00h2.21v2.21h-2.21zM63.79 1.00h2.21v2.21h-2.21zM2.00 3.21h2.21v2.21h-2.21zM15.24 3.21h2.21v2.21h-2.21zM28.48 3.21h2.21v2.21h-2.21zM30.69 3.21h2.21v2.21h-2.21zM32.90 3.21h2.21v2.21h-2.21zM35.10 3.21h2.21v2.21h-2.21zM37.31 3.21h2.21v2.21h-2.21zM39.52 3.21h2.21v2.21h-2.21zM43.93 3.21h2.21v2.21h-2.21zM50.55 3.21h2.21v2.21h-2.21zM63.79 3.21h2.21v2.21h-2.21zM2.00 5.41h2.21v2.21h-2.21zM6.41 5.41h2.21v2.21h-2.21zM8.62 5.41h2.21v2.21h-2.21zM10.83 5.41h2.21v2.21h-2.21zM15.24 5.41h2.21v2.21h-2.21zM19.66 5.41h2.21v2.21h-2.21zM21.86 5.41h2.21v2.21h-2.21zM24.07 5.41h2.21v2.21h-2.21zM28.48 5.41h2.21v2.21h-2.21zM37.31 5.41h2.21v2.21h-2.21zM39.52 5.41h2.21v2.21h-2.21zM46.14 5.41h2.21v2.21h-2.21zM50.55 5.41h2.21v2.21h-2.21zM54.97 5.41h2.21v2.21h-2.21zM57.17 5.41h2.21v2.21h-2.21zM59.38 5.41h2.21v2.21h-2.21zM63.79 5.41h2.21v2.21h-2.21zM2.00 7.62h2.21v2.21h-2.21zM6.41 7.62h2.21v2.21h-2.21zM8.62 7.62h2.21v2.21h-2.21zM10.83 7.62h2.21v2.21h-2.21zM15.24 7.62h2.21v2.21h-2.21zM19.66 7.62h2.21v2.21h-2.21zM26.28 7.62h2.21v2.21h-2.21zM28.48 7.62h2.21v2.21h-2.21zM35.10 7.62h2.21v2.21h-2.21zM37.31 7.62h2.21v2.21h-2.21zM43.93 7.62h2.21v2.21h-2.21zM46.14 7.62h2.21v2.21h-2.21zM50.55 7.62h2.21v2.21h-2.21zM54.97 7.62h2.21v2.21h-2.21zM57.17 7.62h2.21v2.21h-2.21zM59.38 7.62h2.21v2.21h-2.21zM63.79 7.62h2.21v2.21h-2.21zM2.00 9.83h2.21v2.21h-2.21zM6.41 9.83h2.21v2.21h-2.21zM8.62 9.83h2.21v2.21h-2.21zM10.83 9.83h2.21v2.21h-2.21zM15.24 9.83h2.21v2.21h-2.21zM26.28 9.83h2.21v2.21h-2.21zM28.48 9.83h2.21v2.21h-2.21zM32.90 9.83h2.21v2.21h-2.21zM35.10 9.83h2.21v2.21h-2.21zM37.31 9.83h2.21v2.21h-2.21zM39.52 9.83h2.21v2.21h-2.21zM41.72 9.83h2.21v2.21h-2.21zM50.55 9.83h2.21v2.21h-2.21zM54.97 9.83h2.21v2.21h-2.21zM57.17 9.83h2.21v2.21h-2.21zM59.38 9.83h2.21v2.21h-2.21zM63.79 9.83h2.21v2.21h-2.21zM2.00 12.03h2.21v2.21h-2.21zM15.24 12.03h2.21v2.21h-2.21zM19.66 12.03h2.21v2.21h-2.21zM26.28 12.03h2.21v2.21h-2.21zM35.10 12.03h2.21v2.21h-2.21zM39.52 12.03h2.21v2.21h-2.21zM43.93 12.03h2.21v2.21h-2.21zM50.55 12.03h2.21v2.21h-2.21zM63.79 12.03h2.21v2.21h-2.21zM2.00 14.24h2.21v2.21h-2.21zM4.21 14.24h2.21v2.21h-2.21zM6.41 14.24h2.21v2.21h-2.21zM8.62 14.24h2.21v2.21h-2.21zM10.83 14.24h2.21v2.21h-2.21zM13.03 14.24h2.21v2.21h-2.21zM15.24 14.24h2.21v2.21h-2.21zM21.86 14.24h2.21v2.21h-2.21zM30.69 14.24h2.21v2.21h-2.21zM39.52 14.24h2.21v2.21h-2.21zM50.55 14.24h2.21v2.21h-2.21zM52.76 14.24h2.21v2.21h-2.21zM54.97 14.24h2.21v2.21h-2.21zM57.17 14.24h2.21v2.21h-2.21zM59.38 14.24h2.21v2.21h-2.21zM61.59 14.24h2.21v2.21h-2.21zM63.79 14.24h2.21v2.21h-2.21zM19.66 16.45h2.21v2.21h-2.21zM21.86 16.45h2.21v2.21h-2.21zM24.07 16.45h2.21v2.21h-2.21zM30.69 16.45h2.21v2.21h-2.21zM35.10 16.45h2.21v2.21h-2.21zM37.31 16.45h2.21v2.21h-2.21zM39.52 16.45h2.21v2.21h-2.21zM41.72 16.45h2.21v2.21h-2.21zM43.93 16.45h2.21v2.21h-2.21zM4.21 18.66h2.21v2.21h-2.21zM10.83 18.66h2.21v2.21h-2.21zM13.03 18.66h2.21v2.21h-2.21zM26.28 18.66h2.21v2.21h-2.21zM30.69 18.66h2.21v2.21h-2.21zM32.90 18.66h2.21v2.21h-2.21zM39.52 18.66h2.21v2.21h-2.21zM46.14 18.66h2.21v2.21h-2.21zM48.34 18.66h2.21v2.21h-2.21zM50.55 18.66h2.21v2.21h-2.21zM52.76 18.66h2.21v2.21h-2.21zM57.17 18.66h2.21v2.21h-2.21zM2.00 20.86h2.21v2.21h-2.21zM6.41 20.86h2.21v2.21h-2.21zM8.62 20.86h2.21v2.21h-2.21zM10.83 20.86h2.21v2.21h-2.21zM15.24 20.86h2.21v2.21h-2.21zM17.45 20.86h2.21v2.21h-2.21zM19.66 20.86h2.21v2.21h-2.21zM21.86 20.86h2.21v2.21h-2.21zM26.28 20.86h2.21v2.21h-2.21zM28.48 20.86h2.21v2.21h-2.21zM35.10 20.86h2.21v2.21h-2.21zM39.52 20.86h2.21v2.21h-2.21zM46.14 20.86h2.21v2.21h-2.21zM48.34 20.86h2.21v2.21h-2.21zM50.55 20.86h2.21v2.21h-2.21zM54.97 20.86h2.21v2.21h-2.21zM59.38 20.86h2.21v2.21h-2.21zM4.21 23.07h2.21v2.21h-2.21zM8.62 23.07h2.21v2.21h-2.21zM13.03 23.07h2.21v2.21h-2.21zM15.24 23.07h2.21v2.21h-2.21zM19.66 23.07h2.21v2.21h-2.21zM21.86 23.07h2.21v2.21h-2.21zM28.48 23.07h2.21v2.21h-2.21zM30.69 23.07h2.21v2.21h-2.21zM32.90 23.07h2.21v2.21h-2.21zM41.72 23.07h2.21v2.21h-2.21zM46.14 23.07h2.21v2.21h-2.21zM54.97 23.07h2.21v2.21h-2.21zM59.38 23.07h2.21v2.21h-2.21zM61.59 23.07h2.21v2.21h-2.21zM2.00 25.28h2.21v2.21h-2.21zM4.21 25.28h2.21v2.21h-2.21zM8.62 25.28h2.21v2.21h-2.21zM15.24 25.28h2.21v2.21h-2.21zM17.45 25.28h2.21v2.21h-2.21zM24.07 25.28h2.21v2.21h-2.21zM26.28 25.28h2.21v2.21h-2.21zM30.69 25.28h2.21v2.21h-2.21zM32.90 25.28h2.21v2.21h-2.21zM35.10 25.28h2.21v2.21h-2.21zM41.72 25.28h2.21v2.21h-2.21zM43.93 25.28h2.21v2.21h-2.21zM52.76 25.28h2.21v2.21h-2.21zM63.79 25.28h2.21v2.21h-2.21zM4.21 27.48h2.21v2.21h-2.21zM13.03 27.48h2.21v2.21h-2.21zM15.24 27.48h2.21v2.21h-2.21zM19.66 27.48h2.21v2.21h-2.21zM24.07 27.48h2.21v2.21h-2.21zM26.28 27.48h2.21v2.21h-2.21zM30.69 27.48h2.21v2.21h-2.21zM32.90 27.48h2.21v2.21h-2.21zM35.10 27.48h2.21v2.21h-2.21zM37.31 27.48h2.21v2.21h-2.21zM39.52 27.48h2.21v2.21h-2.21zM48.34 27.48h2.21v2.21h-2.21zM50.55 27.48h2.21v2.21h-2.21zM52.76 27.48h2.21v2.21h-2.21zM57.17 27.48h2.21v2.21h-2.21zM61.59 27.48h2.21v2.21h-2.21zM63.79 27.48h2.21v2.21h-2.21zM4.21 29.69h2.21v2.21h-2.21zM17.45 29.69h2.21v2.21h-2.21zM21.86 29.69h2.21v2.21h-2.21zM28.48 29.69h2.21v2.21h-2.21zM30.69 29.69h2.21v2.21h-2.21zM32.90 29.69h2.21v2.21h-2.21zM37.31 29.69h2.21v2.21h-2.21zM43.93 29.69h2.21v2.21h-2.21zM48.34 29.69h2.21v2.21h-2.21zM50.55 29.69h2.21v2.21h-2.21zM54.97 29.69h2.21v2.21h-2.21zM59.38 29.69h2.21v2.21h-2.21zM61.59 29.69h2.21v2.21h-2.21zM2.00 31.90h2.21v2.21h-2.21zM6.41 31.90h2.21v2.21h-2.21zM8.62 31.90h2.21v2.21h-2.21zM15.24 31.90h2.21v2.21h-2.21zM17.45 31.90h2.21v2.21h-2.21zM26.28 31.90h2.21v2.21h-2.21zM30.69 31.90h2.21v2.21h-2.21zM32.90 31.90h2.21v2.21h-2.21zM35.10 31.90h2.21v2.21h-2.21zM39.52 31.90h2.21v2.21h-2.21zM41.72 31.90h2.21v2.21h-2.21zM43.93 31.90h2.21v2.21h-2.21zM52.76 31.90h2.21v2.21h-2.21zM2.00 34.10h2.21v2.21h-2.21zM4.21 34.10h2.21v2.21h-2.21zM6.41 34.10h2.21v2.21h-2.21zM8.62 34.10h2.21v2.21h-2.21zM10.83 34.10h2.21v2.21h-2.21zM15.24 34.10h2.21v2.21h-2.21zM19.66 34.10h2.21v2.21h-2.21zM21.86 34.10h2.21v2.21h-2.21zM28.48 34.10h2.21v2.21h-2.21zM30.69 34.10h2.21v2.21h-2.21zM32.90 34.10h2.21v2.21h-2.21zM35.10 34.10h2.21v2.21h-2.21zM37.31 34.10h2.21v2.21h-2.21zM39.52 34.10h2.21v2.21h-2.21zM41.72 34.10h2.21v2.21h-2.21zM46.14 34.10h2.21v2.21h-2.21zM48.34 34.10h2.21v2.21h-2.21zM50.55 34.10h2.21v2.21h-2.21zM52.76 34.10h2.21v2.21h-2.21zM54.97 34.10h2.21v2.21h-2.21zM57.17 34.10h2.21v2.21h-2.21zM59.38 34.10h2.21v2.21h-2.21zM61.59 34.10h2.21v2.21h-2.21zM2.00 36.31h2.21v2.21h-2.21zM10.83 36.31h2.21v2.21h-2.21zM15.24 36.31h2.21v2.21h-2.21zM19.66 36.31h2.21v2.21h-2.21zM26.28 36.31h2.21v2.21h-2.21zM28.48 36.31h2.21v2.21h-2.21zM30.69 36.31h2.21v2.21h-2.21zM32.90 36.31h2.21v2.21h-2.21zM35.10 36.31h2.21v2.21h-2.21zM37.31 36.31h2.21v2.21h-2.21zM41.72 36.31h2.21v2.21h-2.21zM43.93 36.31h2.21v2.21h-2.21zM46.14 36.31h2.21v2.21h-2.21zM48.34 36.31h2.21v2.21h-2.21zM54.97 36.31h2.21v2.21h-2.21zM57.17 36.31h2.21v2.21h-2.21zM2.00 38.52h2.21v2.21h-2.21zM6.41 38.52h2.21v2.21h-2.21zM8.62 38.52h2.21v2.21h-2.21zM13.03 38.52h2.21v2.21h-2.21zM15.24 38.52h2.21v2.21h-2.21zM24.07 38.52h2.21v2.21h-2.21zM26.28 38.52h2.21v2.21h-2.21zM28.48 38.52h2.21v2.21h-2.21zM32.90 38.52h2.21v2.21h-2.21zM37.31 38.52h2.21v2.21h-2.21zM39.52 38.52h2.21v2.21h-2.21zM41.72 38.52h2.21v2.21h-2.21zM43.93 38.52h2.21v2.21h-2.21zM46.14 38.52h2.21v2.21h-2.21zM48.34 38.52h2.21v2.21h-2.21zM50.55 38.52h2.21v2.21h-2.21zM52.76 38.52h2.21v2.21h-2.21zM54.97 38.52h2.21v2.21h-2.21zM57.17 38.52h2.21v2.21h-2.21zM61.59 38.52h2.21v2.21h-2.21zM2.00 40.72h2.21v2.21h-2.21zM6.41 40.72h2.21v2.21h-2.21zM8.62 40.72h2.21v2.21h-2.21zM10.83 40.72h2.21v2.21h-2.21zM21.86 40.72h2.21v2.21h-2.21zM24.07 40.72h2.21v2.21h-2.21zM28.48 40.72h2.21v2.21h-2.21zM32.90 40.72h2.21v2.21h-2.21zM41.72 40.72h2.21v2.21h-2.21zM43.93 40.72h2.21v2.21h-2.21zM48.34 40.72h2.21v2.21h-2.21zM50.55 40.72h2.21v2.21h-2.21zM52.76 40.72h2.21v2.21h-2.21zM54.97 40.72h2.21v2.21h-2.21zM61.59 40.72h2.21v2.21h-2.21zM63.79 40.72h2.21v2.21h-2.21zM2.00 42.93h2.21v2.21h-2.21zM4.21 42.93h2.21v2.21h-2.21zM6.41 42.93h2.21v2.21h-2.21zM8.62 42.93h2.21v2.21h-2.21zM13.03 42.93h2.21v2.21h-2.21zM15.24 42.93h2.21v2.21h-2.21zM19.66 42.93h2.21v2.21h-2.21zM21.86 42.93h2.21v2.21h-2.21zM24.07 42.93h2.21v2.21h-2.21zM26.28 42.93h2.21v2.21h-2.21zM28.48 42.93h2.21v2.21h-2.21zM30.69 42.93h2.21v2.21h-2.21zM32.90 42.93h2.21v2.21h-2.21zM48.34 42.93h2.21v2.21h-2.21zM61.59 42.93h2.21v2.21h-2.21zM2.00 45.14h2.21v2.21h-2.21zM4.21 45.14h2.21v2.21h-2.21zM6.41 45.14h2.21v2.21h-2.21zM8.62 45.14h2.21v2.21h-2.21zM10.83 45.14h2.21v2.21h-2.21zM15.24 45.14h2.21v2.21h-2.21zM17.45 45.14h2.21v2.21h-2.21zM24.07 45.14h2.21v2.21h-2.21zM26.28 45.14h2.21v2.21h-2.21zM28.48 45.14h2.21v2.21h-2.21zM30.69 45.14h2.21v2.21h-2.21zM39.52 45.14h2.21v2.21h-2.21zM41.72 45.14h2.21v2.21h-2.21zM43.93 45.14h2.21v2.21h-2.21zM46.14 45.14h2.21v2.21h-2.21zM48.34 45.14h2.21v2.21h-2.21zM57.17 45.14h2.21v2.21h-2.21zM61.59 45.14h2.21v2.21h-2.21zM19.66 47.34h2.21v2.21h-2.21zM32.90 47.34h2.21v2.21h-2.21zM37.31 47.34h2.21v2.21h-2.21zM39.52 47.34h2.21v2.21h-2.21zM43.93 47.34h2.21v2.21h-2.21zM48.34 47.34h2.21v2.21h-2.21zM52.76 47.34h2.21v2.21h-2.21zM54.97 47.34h2.21v2.21h-2.21zM57.17 47.34h2.21v2.21h-2.21zM59.38 47.34h2.21v2.21h-2.21zM63.79 47.34h2.21v2.21h-2.21zM2.00 49.55h2.21v2.21h-2.21zM4.21 49.55h2.21v2.21h-2.21zM6.41 49.55h2.21v2.21h-2.21zM8.62 49.55h2.21v2.21h-2.21zM10.83 49.55h2.21v2.21h-2.21zM13.03 49.55h2.21v2.21h-2.21zM15.24 49.55h2.21v2.21h-2.21zM19.66 49.55h2.21v2.21h-2.21zM21.86 49.55h2.21v2.21h-2.21zM26.28 49.55h2.21v2.21h-2.21zM28.48 49.55h2.21v2.21h-2.21zM30.69 49.55h2.21v2.21h-2.21zM32.90 49.55h2.21v2.21h-2.21zM39.52 49.55h2.21v2.21h-2.21zM43.93 49.55h2.21v2.21h-2.21zM54.97 49.55h2.21v2.21h-2.21zM57.17 49.55h2.21v2.21h-2.21zM63.79 49.55h2.21v2.21h-2.21zM2.00 51.76h2.21v2.21h-2.21zM15.24 51.76h2.21v2.21h-2.21zM35.10 51.76h2.21v2.21h-2.21zM43.93 51.76h2.21v2.21h-2.21zM46.14 51.76h2.21v2.21h-2.21zM48.34 51.76h2.21v2.21h-2.21zM50.55 51.76h2.21v2.21h-2.21zM59.38 51.76h2.21v2.21h-2.21zM63.79 51.76h2.21v2.21h-2.21zM2.00 53.97h2.21v2.21h-2.21zM6.41 53.97h2.21v2.21h-2.21zM8.62 53.97h2.21v2.21h-2.21zM10.83 53.97h2.21v2.21h-2.21zM15.24 53.97h2.21v2.21h-2.21zM24.07 53.97h2.21v2.21h-2.21zM30.69 53.97h2.21v2.21h-2.21zM37.31 53.97h2.21v2.21h-2.21zM39.52 53.97h2.21v2.21h-2.21zM41.72 53.97h2.21v2.21h-2.21zM43.93 53.97h2.21v2.21h-2.21zM54.97 53.97h2.21v2.21h-2.21zM57.17 53.97h2.21v2.21h-2.21zM2.00 56.17h2.21v2.21h-2.21zM6.41 56.17h2.21v2.21h-2.21zM8.62 56.17h2.21v2.21h-2.21zM10.83 56.17h2.21v2.21h-2.21zM15.24 56.17h2.21v2.21h-2.21zM24.07 56.17h2.21v2.21h-2.21zM26.28 56.17h2.21v2.21h-2.21zM37.31 56.17h2.21v2.21h-2.21zM39.52 56.17h2.21v2.21h-2.21zM46.14 56.17h2.21v2.21h-2.21zM48.34 56.17h2.21v2.21h-2.21zM54.97 56.17h2.21v2.21h-2.21zM57.17 56.17h2.21v2.21h-2.21zM59.38 56.17h2.21v2.21h-2.21zM2.00 58.38h2.21v2.21h-2.21zM6.41 58.38h2.21v2.21h-2.21zM8.62 58.38h2.21v2.21h-2.21zM10.83 58.38h2.21v2.21h-2.21zM15.24 58.38h2.21v2.21h-2.21zM24.07 58.38h2.21v2.21h-2.21zM32.90 58.38h2.21v2.21h-2.21zM39.52 58.38h2.21v2.21h-2.21zM41.72 58.38h2.21v2.21h-2.21zM43.93 58.38h2.21v2.21h-2.21zM46.14 58.38h2.21v2.21h-2.21zM48.34 58.38h2.21v2.21h-2.21zM50.55 58.38h2.21v2.21h-2.21zM54.97 58.38h2.21v2.21h-2.21zM2.00 60.59h2.21v2.21h-2.21zM15.24 60.59h2.21v2.21h-2.21zM19.66 60.59h2.21v2.21h-2.21zM21.86 60.59h2.21v2.21h-2.21zM24.07 60.59h2.21v2.21h-2.21zM30.69 60.59h2.21v2.21h-2.21zM32.90 60.59h2.21v2.21h-2.21zM37.31 60.59h2.21v2.21h-2.21zM39.52 60.59h2.21v2.21h-2.21zM43.93 60.59h2.21v2.21h-2.21zM48.34 60.59h2.21v2.21h-2.21zM54.97 60.59h2.21v2.21h-2.21zM61.59 60.59h2.21v2.21h-2.21zM63.79 60.59h2.21v2.21h-2.21zM2.00 62.79h2.21v2.21h-2.21zM4.21 62.79h2.21v2.21h-2.21zM6.41 62.79h2.21v2.21h-2.21zM8.62 62.79h2.21v2.21h-2.21zM10.83 62.79h2.21v2.21h-2.21zM13.03 62.79h2.21v2.21h-2.21zM15.24 62.79h2.21v2.21h-2.21zM24.07 62.79h2.21v2.21h-2.21zM26.28 62.79h2.21v2.21h-2.21zM32.90 62.79h2.21v2.21h-2.21zM35.10 62.79h2.21v2.21h-2.21zM37.31 62.79h2.21v2.21h-2.21zM41.72 62.79h2.21v2.21h-2.21zM43.93 62.79h2.21v2.21h-2.21zM46.14 62.79h2.21v2.21h-2.21zM48.34 62.79h2.21v2.21h-2.21zM54.97 62.79h2.21v2.21h-2.21zM59.38 62.79h2.21v2.21h-2.21zM61.59 62.79h2.21v2.21h-2.21z" fill="rgba(22,22,22,0.27)"/></svg>
<svg style="left:1371px;top:69px" width="66" height="15" viewBox="0 0 66 15" fill="none" stroke="#a8a6a2" stroke-width="1.1">
<path d="M3 1l-2 4M3 5v9M6 2v4h6V2M5 8h8M8 6v8M6 10h4v3M14 2l-1 4h3M15 6q0 5-2 8M13 8l3 6"/>
<path d="M20 2l-2 5M19 5v9M23 2h3M21 5h9M22 8h7M22 10h7M22 12h7v2h-7z"/>
<path d="M36 3h6M37 3v10M36 6h5M36 9h5M35 13l7-1M43 3l1 2M48 3l-1 2M43 6h6M42 9h8M46 6v3l-3 5M46 9l4 5"/>
<path d="M54 2l8-1M57 2l-3 4 5 1-5 4h8M58 7v7M55 12l-2 2M61 12l2 2"/>
</svg>
<div class="t" style="left:1344px;top:5px;font-size:10px;color:#23233a;letter-spacing:-0.3px">Mi Mai 23, 13:59</div>
<div class="a" style="left:1297px;top:880px;width:28px;height:18px;background:#73904f"></div>
<div class="a" style="left:1302px;top:884px;width:15px;height:10px;background:#f4f4f4;border:1px solid #bbb"></div>
<div class="a" style="left:1326px;top:880px;width:92px;height:18px;background:#bdbbb6"></div>
<div class="a" style="left:1356px;top:880px;width:1px;height:18px;background:#e8e6e2"></div>
<div class="a" style="left:1387px;top:880px;width:1px;height:18px;background:#e8e6e2"></div>
<svg style="left:1281px;top:843px" width="156" height="30" viewBox="0 0 156 30" fill="none" stroke-width="3.6" stroke-linecap="square">
<g stroke="#d58c8c" stroke-opacity="0.9">
<path d="M7 2.5H23V13H7ZM7 7.7H23M3.5 16H26L24 27.5H20M10 16L3.5 26M15.5 16L9.5 27M21 16L15 26.5"/>
<path transform="translate(29,0)" d="M3.5 3L5.5 5.5M2 11H6V21.5L2.5 25.5M5 24.5Q15 28 28 27M11.5 6.5H26.5V21H11.5ZM19 1.5V21M11.5 13.8H26.5"/>
<path transform="translate(58,0)" d="M1.5 9.5H10M6 2V25.5L3 24.5M1.5 20L10 15.5M12.5 4H28.5M19.5 4L12.5 18M15.5 14.5H27.5V27H15.5Z"/>
</g>
<g stroke="#9191c8" stroke-opacity="0.9">
<path transform="translate(92,0)" d="M1.5 10.5H10M5.8 3V23M1 25.5L11 22M20.5 1V4.5M13 6.5H28M16.5 8.5L18 12M25 8.5L23.5 12M12 13.8H29M15.5 17.5H27V28H15.5Z"/>
<path transform="translate(122,0)" d="M3.5 3L5.5 5.5M2 11H6V24.5L9 22M14 4V21.5L12 26M21 3V24.5M28 2V28"/>
</g></svg>
<svg style="left:1281px;top:876px" width="158" height="22" viewBox="0 0 158 22" fill="none" stroke="#8a8884" stroke-opacity="0.95" stroke-width="1.9">
<path d="M4 2.5L6 1M3 4H10V20L8 19M3 4V14L1 19M3 8.5H10M3 12.5H10M1 15.5L11 13M13 7H17M15 2V20L13 19M12 10L14 13"/>
<path transform="translate(17,0)" d="M2 3V10M1 6H6M5 2V10M1 10H7M4 10L1 20M4 14L7 19M9 3H16M12 3V6M9 6H16V14H9ZM12.5 8V12M10 17L8 20M14 16L16 20"/>
<path transform="translate(34,0)" d="M7 1L2 4M1 7H8M4.5 4V20M4 9L1 15M5 9L8 13M10 5H16V18H10Z"/>
<path transform="translate(51,0)" d="M2 3H15M1 9H16M8.5 3V9L2 20M8.5 9L15.5 20"/>
<path transform="translate(68,0)" d="M4 2L1 7L5 8L1 14H6M1 18L7 16M8 6H16M8 11H16M11 2L16 20M16 12L10 19M14 2L16 4"/>
<path transform="translate(85,0)" d="M2 2L4 4M1 8H4V18L6 16M9 3V8H14V3M8 11H15L9 20M10 13L16 20"/>
<path transform="translate(102,0)" d="M2 2L4 4M1 8H4V18L6 16M8 9H16M12 2V20"/>
<path transform="translate(119,0)" d="M2 5H15M1 10H16M8 1L5 14H14L10 19"/>
<path transform="translate(136,0)" d="M8 1V3M2 5V3H15V5M4 8H13L3 14M8 10L14 20M8 13L3 19M10 13L16 15"/>
</svg>
<svg style="left:1421px;top:880px" width="19" height="19" viewBox="0 0 19 19"><path d="M3 5h13l-2 13H5z" fill="#c8c6c2" stroke="#999"/><path d="M2 4h15" stroke="#888" stroke-width="2"/></svg>
</body></html>
